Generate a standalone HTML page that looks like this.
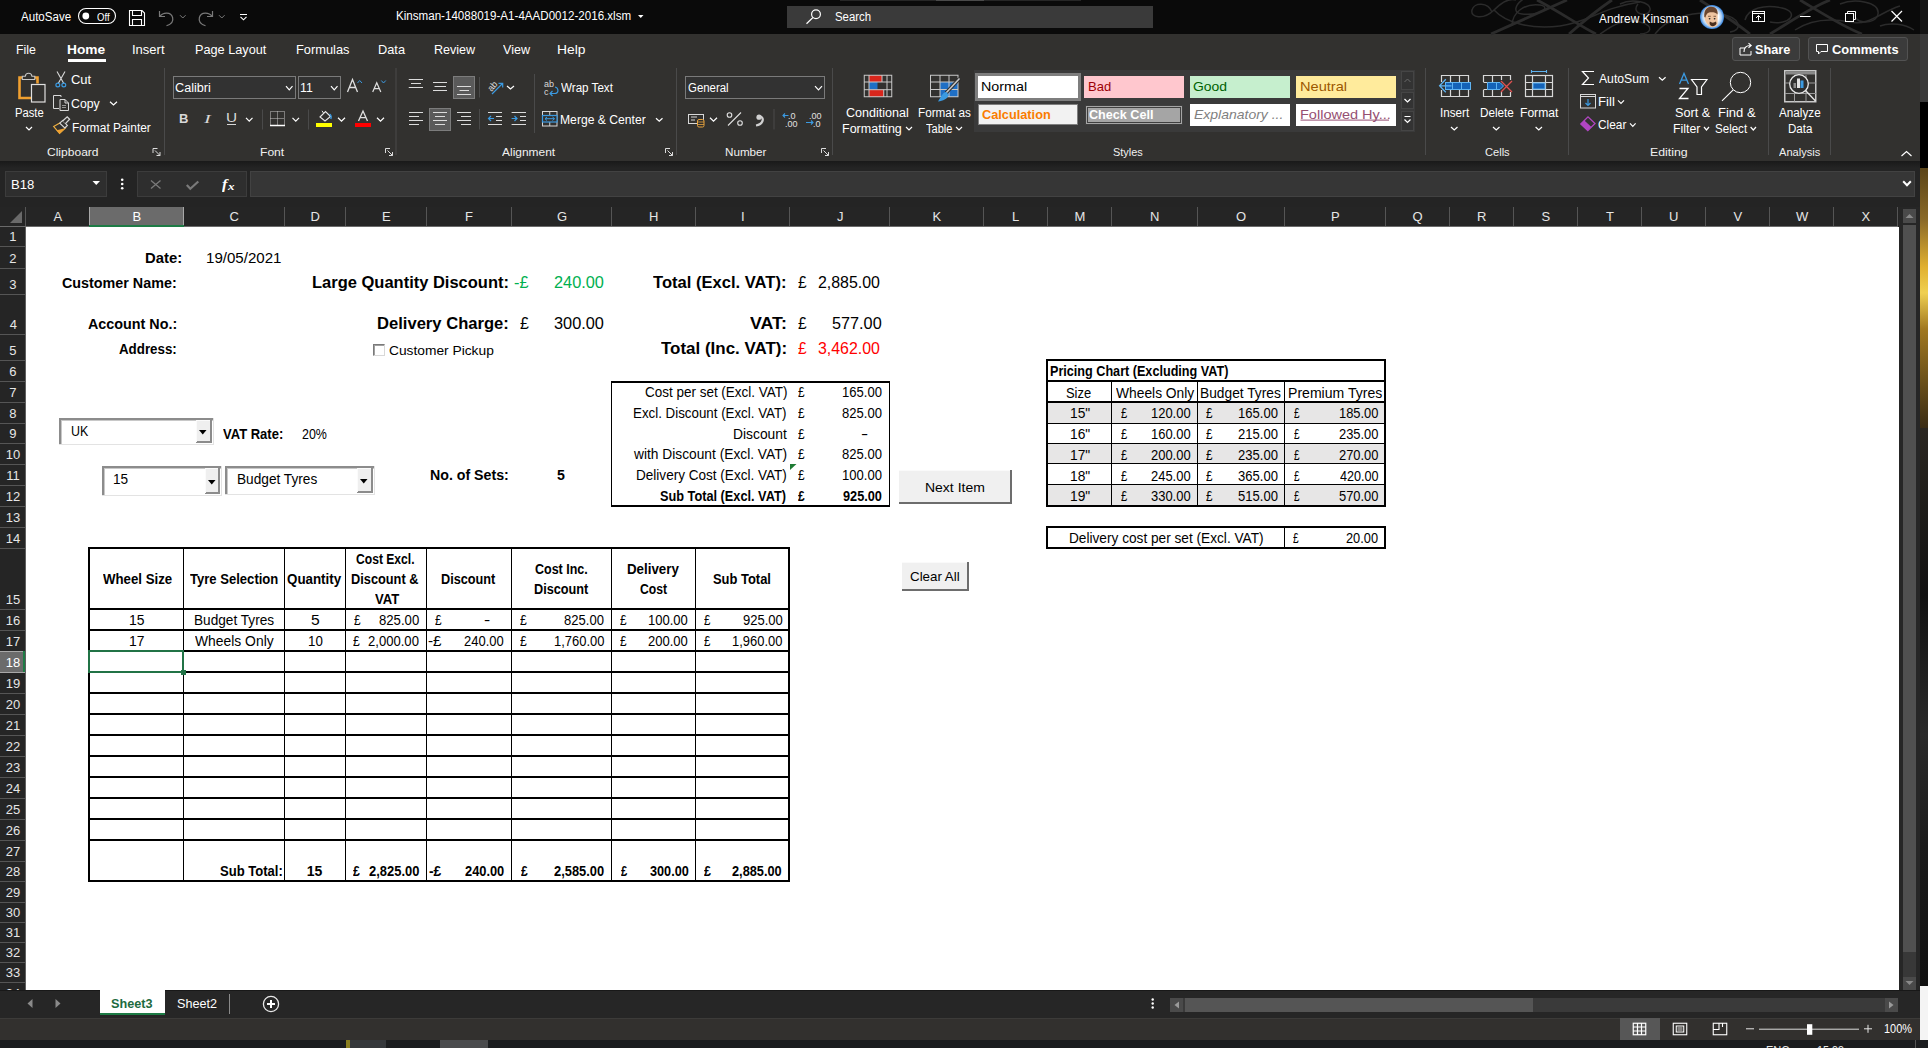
<!DOCTYPE html>
<html><head><meta charset="utf-8"><style>
html,body{margin:0;padding:0;}
body{width:1928px;height:1048px;position:relative;overflow:hidden;background:#1e1e1e;font-family:"Liberation Sans",sans-serif;}
.r{position:absolute;}
.t{position:absolute;white-space:pre;}
svg.r{overflow:visible;}
</style></head><body>
<div class="r" style="left:0px;top:0px;width:1920px;height:34px;background:#0a0a0a;"></div>
<div class="r" style="left:0px;top:34px;width:1920px;height:127px;background:#32312f;"></div>
<div class="r" style="left:0px;top:161px;width:1920px;height:829px;background:#242424;"></div>
<div class="r" style="left:0px;top:161px;width:1920px;height:7px;background:linear-gradient(#191919,#242424);"></div>
<div class="r" style="left:1920px;top:0px;width:8px;height:34px;background:#151515;"></div>
<div class="r" style="left:1920px;top:34px;width:8px;height:68px;background:#3a3a3a;"></div>
<div class="r" style="left:1920px;top:102px;width:8px;height:66px;background:#000;"></div>
<div class="r" style="left:1920px;top:168px;width:8px;height:260px;background:linear-gradient(180deg,#5a4418 0%,#8a6a28 20%,#e0b030 38%,#f0d050 48%,#a07820 62%,#3a2c14 100%);"></div>
<div class="r" style="left:1920px;top:428px;width:8px;height:558px;background:linear-gradient(180deg,#2a2620 0%,#111 30%,#2a2a2a 55%,#1a1a1a 75%,#101010 100%);"></div>
<div class="r" style="left:1920px;top:986px;width:8px;height:54px;background:#f4f4f4;"></div>
<div class="r" style="left:0px;top:1040px;width:1928px;height:8px;background:#1b1d1f;"></div>
<div class="r" style="left:5px;top:171px;width:102px;height:26px;background:#2e2e2e;border:1px solid #3c3c3c;box-sizing:border-box;"></div>
<div class="r" style="left:137px;top:171px;width:110px;height:26px;background:#2e2e2e;border:1px solid #3c3c3c;box-sizing:border-box;"></div>
<div class="r" style="left:250px;top:171px;width:1665px;height:26px;background:#363636;border:1px solid #424242;box-sizing:border-box;"></div>
<div class="r" style="left:0px;top:207px;width:1898px;height:20px;background:#252525;"></div>
<div class="r" style="left:25px;top:207px;width:1px;height:19px;background:#555555;"></div>
<div class="r" style="left:89px;top:207px;width:1px;height:19px;background:#555555;"></div>
<div class="r" style="left:183px;top:207px;width:1px;height:19px;background:#555555;"></div>
<div class="r" style="left:284px;top:207px;width:1px;height:19px;background:#555555;"></div>
<div class="r" style="left:345px;top:207px;width:1px;height:19px;background:#555555;"></div>
<div class="r" style="left:426px;top:207px;width:1px;height:19px;background:#555555;"></div>
<div class="r" style="left:511px;top:207px;width:1px;height:19px;background:#555555;"></div>
<div class="r" style="left:611px;top:207px;width:1px;height:19px;background:#555555;"></div>
<div class="r" style="left:695px;top:207px;width:1px;height:19px;background:#555555;"></div>
<div class="r" style="left:789px;top:207px;width:1px;height:19px;background:#555555;"></div>
<div class="r" style="left:889px;top:207px;width:1px;height:19px;background:#555555;"></div>
<div class="r" style="left:983px;top:207px;width:1px;height:19px;background:#555555;"></div>
<div class="r" style="left:1047px;top:207px;width:1px;height:19px;background:#555555;"></div>
<div class="r" style="left:1111px;top:207px;width:1px;height:19px;background:#555555;"></div>
<div class="r" style="left:1197px;top:207px;width:1px;height:19px;background:#555555;"></div>
<div class="r" style="left:1284px;top:207px;width:1px;height:19px;background:#555555;"></div>
<div class="r" style="left:1385px;top:207px;width:1px;height:19px;background:#555555;"></div>
<div class="r" style="left:1449px;top:207px;width:1px;height:19px;background:#555555;"></div>
<div class="r" style="left:1513px;top:207px;width:1px;height:19px;background:#555555;"></div>
<div class="r" style="left:1577px;top:207px;width:1px;height:19px;background:#555555;"></div>
<div class="r" style="left:1641px;top:207px;width:1px;height:19px;background:#555555;"></div>
<div class="r" style="left:1705px;top:207px;width:1px;height:19px;background:#555555;"></div>
<div class="r" style="left:1769px;top:207px;width:1px;height:19px;background:#555555;"></div>
<div class="r" style="left:1833px;top:207px;width:1px;height:19px;background:#555555;"></div>
<div class="r" style="left:1897px;top:207px;width:1px;height:19px;background:#555555;"></div>
<div class="r" style="left:0px;top:226px;width:1898px;height:1px;background:#6a6a6a;"></div>
<div class="r" style="left:89px;top:207px;width:95px;height:19px;background:#6b6b6b;"></div>
<div class="r" style="left:89px;top:207px;width:1px;height:19px;background:#a8a8a8;"></div>
<div class="r" style="left:183px;top:207px;width:1px;height:19px;background:#a8a8a8;"></div>
<div class="r" style="left:89px;top:225px;width:95px;height:2px;background:#1d7b45;"></div>
<svg class="r" style="left:10px;top:211px;" width="13" height="13" viewBox="0 0 13 13"><path d="M12 0 L12 12 L0 12 Z" fill="#6a6a6a"/></svg>
<div class="r" style="left:0px;top:227px;width:25px;height:763px;background:#252525;"></div>
<div class="r" style="left:0px;top:246px;width:25px;height:1px;background:#555555;"></div>
<div class="r" style="left:0px;top:268px;width:25px;height:1px;background:#555555;"></div>
<div class="r" style="left:0px;top:294px;width:25px;height:1px;background:#555555;"></div>
<div class="r" style="left:0px;top:334px;width:25px;height:1px;background:#555555;"></div>
<div class="r" style="left:0px;top:360px;width:25px;height:1px;background:#555555;"></div>
<div class="r" style="left:0px;top:381px;width:25px;height:1px;background:#555555;"></div>
<div class="r" style="left:0px;top:402px;width:25px;height:1px;background:#555555;"></div>
<div class="r" style="left:0px;top:423px;width:25px;height:1px;background:#555555;"></div>
<div class="r" style="left:0px;top:443px;width:25px;height:1px;background:#555555;"></div>
<div class="r" style="left:0px;top:464px;width:25px;height:1px;background:#555555;"></div>
<div class="r" style="left:0px;top:485px;width:25px;height:1px;background:#555555;"></div>
<div class="r" style="left:0px;top:506px;width:25px;height:1px;background:#555555;"></div>
<div class="r" style="left:0px;top:527px;width:25px;height:1px;background:#555555;"></div>
<div class="r" style="left:0px;top:548px;width:25px;height:1px;background:#555555;"></div>
<div class="r" style="left:0px;top:609px;width:25px;height:1px;background:#555555;"></div>
<div class="r" style="left:0px;top:630px;width:25px;height:1px;background:#555555;"></div>
<div class="r" style="left:0px;top:651px;width:25px;height:1px;background:#555555;"></div>
<div class="r" style="left:0px;top:672px;width:25px;height:1px;background:#555555;"></div>
<div class="r" style="left:0px;top:693px;width:25px;height:1px;background:#555555;"></div>
<div class="r" style="left:0px;top:714px;width:25px;height:1px;background:#555555;"></div>
<div class="r" style="left:0px;top:735px;width:25px;height:1px;background:#555555;"></div>
<div class="r" style="left:0px;top:756px;width:25px;height:1px;background:#555555;"></div>
<div class="r" style="left:0px;top:777px;width:25px;height:1px;background:#555555;"></div>
<div class="r" style="left:0px;top:798px;width:25px;height:1px;background:#555555;"></div>
<div class="r" style="left:0px;top:819px;width:25px;height:1px;background:#555555;"></div>
<div class="r" style="left:0px;top:840px;width:25px;height:1px;background:#555555;"></div>
<div class="r" style="left:0px;top:861px;width:25px;height:1px;background:#555555;"></div>
<div class="r" style="left:0px;top:881px;width:25px;height:1px;background:#555555;"></div>
<div class="r" style="left:0px;top:902px;width:25px;height:1px;background:#555555;"></div>
<div class="r" style="left:0px;top:922px;width:25px;height:1px;background:#555555;"></div>
<div class="r" style="left:0px;top:942px;width:25px;height:1px;background:#555555;"></div>
<div class="r" style="left:0px;top:962px;width:25px;height:1px;background:#555555;"></div>
<div class="r" style="left:0px;top:982px;width:25px;height:1px;background:#555555;"></div>
<div class="r" style="left:0px;top:1003px;width:25px;height:1px;background:#555555;"></div>
<div class="r" style="left:25px;top:227px;width:1px;height:763px;background:#5f5f5f;"></div>
<div class="r" style="left:0px;top:651px;width:25px;height:21px;background:#6b6b6b;"></div>
<div class="r" style="left:0px;top:651px;width:25px;height:1px;background:#a8a8a8;"></div>
<div class="r" style="left:0px;top:672px;width:25px;height:1px;background:#a8a8a8;"></div>
<div class="r" style="left:23px;top:651px;width:2px;height:21px;background:#1d7b45;"></div>
<div class="r" style="left:26px;top:227px;width:1873px;height:763px;background:#ffffff;"></div>
<div class="r" style="left:1899px;top:207px;width:21px;height:783px;background:#262626;"></div>
<div class="r" style="left:1903px;top:209px;width:13px;height:14px;background:#4a4a4a;"></div>
<svg class="r" style="left:1903px;top:209px;" width="13" height="14" viewBox="0 0 13 14"><path d="M2.5 9 L6.5 5 L10.5 9 Z" fill="#8a8a8a"/></svg>
<div class="r" style="left:1903px;top:225px;width:13px;height:727px;background:#505050;"></div>
<div class="r" style="left:1903px;top:952px;width:13px;height:25px;background:#383838;"></div>
<div class="r" style="left:1903px;top:977px;width:13px;height:13px;background:#4a4a4a;"></div>
<svg class="r" style="left:1903px;top:977px;" width="13" height="13" viewBox="0 0 13 13"><path d="M2.5 4 L6.5 8 L10.5 4 Z" fill="#8a8a8a"/></svg>
<div class="r" style="left:0px;top:990px;width:1920px;height:28px;background:#262626;"></div>
<div class="r" style="left:0px;top:990px;width:1920px;height:1px;background:#181818;"></div>
<div class="r" style="left:100px;top:990px;width:65px;height:25px;background:#ffffff;"></div>
<div class="r" style="left:100px;top:1013px;width:65px;height:2px;background:#1d7b45;"></div>
<div class="r" style="left:229px;top:994px;width:1px;height:20px;background:#8a8a8a;"></div>
<svg class="r" style="left:27px;top:999px;" width="6" height="9" viewBox="0 0 6 9"><path d="M5.5 0 L0.5 4.5 L5.5 9 Z" fill="#8a8a8a"/></svg>
<svg class="r" style="left:55px;top:999px;" width="6" height="9" viewBox="0 0 6 9"><path d="M0.5 0 L5.5 4.5 L0.5 9 Z" fill="#8a8a8a"/></svg>
<svg class="r" style="left:262px;top:995px;" width="18" height="18" viewBox="0 0 18 18"><circle cx="9" cy="9" r="7.6" fill="none" stroke="#e8e8e8" stroke-width="1.3"/><path d="M9 5 V13 M5 9 H13" stroke="#fff" stroke-width="2"/></svg>
<div class="r" style="left:1170px;top:998px;width:728px;height:14px;background:#3a3a3a;"></div>
<div class="r" style="left:1170px;top:998px;width:13px;height:14px;background:#4a4a4a;"></div>
<svg class="r" style="left:1170px;top:998px;" width="13" height="14" viewBox="0 0 13 14"><path d="M9 3.5 L4.5 7 L9 10.5 Z" fill="#9a9a9a"/></svg>
<div class="r" style="left:1185px;top:998px;width:348px;height:14px;background:#555555;"></div>
<div class="r" style="left:1885px;top:998px;width:13px;height:14px;background:#4a4a4a;"></div>
<svg class="r" style="left:1885px;top:998px;" width="13" height="14" viewBox="0 0 13 14"><path d="M4 3.5 L8.5 7 L4 10.5 Z" fill="#9a9a9a"/></svg>
<svg class="r" style="left:1150px;top:998px;" width="6" height="12" viewBox="0 0 6 12"><circle cx="2.7" cy="1.5" r="1.2" fill="#fff"/><circle cx="2.7" cy="5.5" r="1.2" fill="#fff"/><circle cx="2.7" cy="9.5" r="1.2" fill="#fff"/></svg>
<div class="r" style="left:0px;top:1018px;width:1920px;height:22px;background:#32302e;"></div>
<div class="r" style="left:0px;top:1018px;width:1920px;height:1px;background:#3c3b39;"></div>
<div class="r" style="left:1620px;top:1018px;width:40px;height:22px;background:#575757;"></div>
<div class="r" style="left:373px;top:344px;width:12px;height:12px;background:#ffffff;border-top:1px solid #7a7a7a;border-left:1px solid #7a7a7a;border-right:1px solid #d8d8d8;border-bottom:1px solid #d8d8d8;box-sizing:border-box;"></div>
<div class="r" style="left:374px;top:345px;width:10px;height:10px;border-top:1px solid #a0a0a0;border-left:1px solid #a0a0a0;box-sizing:border-box;"></div>
<div class="r" style="left:611px;top:381px;width:279px;height:2px;background:#000;"></div>
<div class="r" style="left:611px;top:505px;width:279px;height:2px;background:#000;"></div>
<div class="r" style="left:611px;top:381px;width:1px;height:126px;background:#000;"></div>
<div class="r" style="left:889px;top:381px;width:1px;height:126px;background:#000;"></div>
<svg class="r" style="left:790px;top:464px;" width="7" height="6" viewBox="0 0 7 6"><path d="M0 0 H6.5 L0 6 Z" fill="#1e7b33"/></svg>
<div class="r" style="left:899px;top:470px;width:113px;height:34px;background:#f0f0f0;"></div>
<div class="r" style="left:899px;top:502px;width:113px;height:2px;background:#6d6d6d;"></div>
<div class="r" style="left:1010px;top:470px;width:2px;height:34px;background:#6d6d6d;"></div>
<div class="r" style="left:899px;top:470px;width:111px;height:1px;background:#fafafa;"></div>
<div class="r" style="left:902px;top:562px;width:67px;height:29px;background:#f0f0f0;"></div>
<div class="r" style="left:902px;top:589px;width:67px;height:2px;background:#6d6d6d;"></div>
<div class="r" style="left:967px;top:562px;width:2px;height:29px;background:#6d6d6d;"></div>
<div class="r" style="left:902px;top:562px;width:65px;height:1px;background:#fafafa;"></div>
<div class="r" style="left:59px;top:418px;width:155px;height:27px;background:#ffffff;"></div>
<div class="r" style="left:59px;top:418px;width:155px;height:2px;background:#8c8c8c;"></div>
<div class="r" style="left:59px;top:418px;width:2px;height:27px;background:#8c8c8c;"></div>
<div class="r" style="left:59px;top:444px;width:155px;height:1px;background:#e3e3e3;"></div>
<div class="r" style="left:213px;top:418px;width:1px;height:27px;background:#e3e3e3;"></div>
<div class="r" style="left:61px;top:420px;width:152px;height:1px;background:#c8c8c8;"></div>
<div class="r" style="left:61px;top:420px;width:1px;height:24px;background:#c8c8c8;"></div>
<div class="r" style="left:196px;top:420px;width:16px;height:23px;background:#efefef;"></div>
<div class="r" style="left:196px;top:441px;width:16px;height:2px;background:#8c8c8c;"></div>
<div class="r" style="left:210px;top:420px;width:2px;height:23px;background:#8c8c8c;"></div>
<div class="r" style="left:196px;top:420px;width:14px;height:1px;background:#fbfbfb;"></div>
<div class="r" style="left:196px;top:420px;width:1px;height:22px;background:#fbfbfb;"></div>
<svg class="r" style="left:199.0px;top:430px;" width="8" height="5" viewBox="0 0 8 5"><path d="M0 0 H7.5 L3.75 4.5 Z" fill="#000"/></svg>
<div class="r" style="left:102px;top:466px;width:120px;height:30px;background:#ffffff;"></div>
<div class="r" style="left:102px;top:466px;width:120px;height:2px;background:#8c8c8c;"></div>
<div class="r" style="left:102px;top:466px;width:2px;height:30px;background:#8c8c8c;"></div>
<div class="r" style="left:102px;top:495px;width:120px;height:1px;background:#e3e3e3;"></div>
<div class="r" style="left:221px;top:466px;width:1px;height:30px;background:#e3e3e3;"></div>
<div class="r" style="left:104px;top:468px;width:117px;height:1px;background:#c8c8c8;"></div>
<div class="r" style="left:104px;top:468px;width:1px;height:27px;background:#c8c8c8;"></div>
<div class="r" style="left:205px;top:468px;width:15px;height:26px;background:#efefef;"></div>
<div class="r" style="left:205px;top:492px;width:15px;height:2px;background:#8c8c8c;"></div>
<div class="r" style="left:218px;top:468px;width:2px;height:26px;background:#8c8c8c;"></div>
<div class="r" style="left:205px;top:468px;width:13px;height:1px;background:#fbfbfb;"></div>
<div class="r" style="left:205px;top:468px;width:1px;height:25px;background:#fbfbfb;"></div>
<svg class="r" style="left:207.5px;top:480px;" width="8" height="5" viewBox="0 0 8 5"><path d="M0 0 H7.5 L3.75 4.5 Z" fill="#000"/></svg>
<div class="r" style="left:225px;top:466px;width:150px;height:29px;background:#ffffff;"></div>
<div class="r" style="left:225px;top:466px;width:150px;height:2px;background:#8c8c8c;"></div>
<div class="r" style="left:225px;top:466px;width:2px;height:29px;background:#8c8c8c;"></div>
<div class="r" style="left:225px;top:494px;width:150px;height:1px;background:#e3e3e3;"></div>
<div class="r" style="left:374px;top:466px;width:1px;height:29px;background:#e3e3e3;"></div>
<div class="r" style="left:227px;top:468px;width:147px;height:1px;background:#c8c8c8;"></div>
<div class="r" style="left:227px;top:468px;width:1px;height:26px;background:#c8c8c8;"></div>
<div class="r" style="left:357px;top:468px;width:16px;height:25px;background:#efefef;"></div>
<div class="r" style="left:357px;top:491px;width:16px;height:2px;background:#8c8c8c;"></div>
<div class="r" style="left:371px;top:468px;width:2px;height:25px;background:#8c8c8c;"></div>
<div class="r" style="left:357px;top:468px;width:14px;height:1px;background:#fbfbfb;"></div>
<div class="r" style="left:357px;top:468px;width:1px;height:24px;background:#fbfbfb;"></div>
<svg class="r" style="left:360.0px;top:479px;" width="8" height="5" viewBox="0 0 8 5"><path d="M0 0 H7.5 L3.75 4.5 Z" fill="#000"/></svg>
<div class="r" style="left:1048px;top:403px;width:336px;height:20px;background:#e7e6e6;"></div>
<div class="r" style="left:1048px;top:444px;width:336px;height:19px;background:#e7e6e6;"></div>
<div class="r" style="left:1048px;top:485px;width:336px;height:20px;background:#e7e6e6;"></div>
<div class="r" style="left:1046px;top:359px;width:340px;height:2px;background:#000;"></div>
<div class="r" style="left:1046px;top:505px;width:340px;height:2px;background:#000;"></div>
<div class="r" style="left:1046px;top:359px;width:2px;height:148px;background:#000;"></div>
<div class="r" style="left:1384px;top:359px;width:2px;height:148px;background:#000;"></div>
<div class="r" style="left:1046px;top:380px;width:340px;height:2px;background:#000;"></div>
<div class="r" style="left:1046px;top:401px;width:340px;height:2px;background:#000;"></div>
<div class="r" style="left:1046px;top:423px;width:340px;height:1px;background:#000;"></div>
<div class="r" style="left:1046px;top:443px;width:340px;height:1px;background:#000;"></div>
<div class="r" style="left:1046px;top:463px;width:340px;height:1px;background:#000;"></div>
<div class="r" style="left:1046px;top:484px;width:340px;height:1px;background:#000;"></div>
<div class="r" style="left:1111px;top:381px;width:1px;height:125px;background:#000;"></div>
<div class="r" style="left:1197px;top:381px;width:1px;height:125px;background:#000;"></div>
<div class="r" style="left:1284px;top:381px;width:1px;height:125px;background:#000;"></div>
<div class="r" style="left:1046px;top:526px;width:340px;height:2px;background:#000;"></div>
<div class="r" style="left:1046px;top:547px;width:340px;height:2px;background:#000;"></div>
<div class="r" style="left:1046px;top:526px;width:2px;height:23px;background:#000;"></div>
<div class="r" style="left:1384px;top:526px;width:2px;height:23px;background:#000;"></div>
<div class="r" style="left:1284px;top:527px;width:1px;height:21px;background:#000;"></div>
<div class="r" style="left:88px;top:547px;width:702px;height:2px;background:#000;"></div>
<div class="r" style="left:88px;top:880px;width:702px;height:2px;background:#000;"></div>
<div class="r" style="left:88px;top:547px;width:2px;height:335px;background:#000;"></div>
<div class="r" style="left:788px;top:547px;width:2px;height:335px;background:#000;"></div>
<div class="r" style="left:183px;top:548px;width:1px;height:333px;background:#000;"></div>
<div class="r" style="left:284px;top:548px;width:1px;height:333px;background:#000;"></div>
<div class="r" style="left:345px;top:548px;width:1px;height:333px;background:#000;"></div>
<div class="r" style="left:426px;top:548px;width:1px;height:333px;background:#000;"></div>
<div class="r" style="left:511px;top:548px;width:1px;height:333px;background:#000;"></div>
<div class="r" style="left:611px;top:548px;width:1px;height:333px;background:#000;"></div>
<div class="r" style="left:695px;top:548px;width:1px;height:333px;background:#000;"></div>
<div class="r" style="left:88px;top:608px;width:702px;height:2px;background:#000;"></div>
<div class="r" style="left:88px;top:629px;width:702px;height:2px;background:#000;"></div>
<div class="r" style="left:88px;top:650px;width:702px;height:2px;background:#000;"></div>
<div class="r" style="left:88px;top:671px;width:702px;height:2px;background:#000;"></div>
<div class="r" style="left:88px;top:692px;width:702px;height:2px;background:#000;"></div>
<div class="r" style="left:88px;top:713px;width:702px;height:2px;background:#000;"></div>
<div class="r" style="left:88px;top:734px;width:702px;height:2px;background:#000;"></div>
<div class="r" style="left:88px;top:755px;width:702px;height:2px;background:#000;"></div>
<div class="r" style="left:88px;top:776px;width:702px;height:2px;background:#000;"></div>
<div class="r" style="left:88px;top:797px;width:702px;height:2px;background:#000;"></div>
<div class="r" style="left:88px;top:818px;width:702px;height:2px;background:#000;"></div>
<div class="r" style="left:88px;top:839px;width:702px;height:2px;background:#000;"></div>
<div class="r" style="left:68px;top:59px;width:38px;height:3px;background:#ffffff;"></div>
<svg class="r" style="left:0;top:0" width="1920" height="34" viewBox="0 0 1920 34"><g stroke="#2b2b2b" fill="none" stroke-width="1.5"><path d="M1492 12 C1488 2,1474 2,1472 10 C1470 18,1484 20,1494 10 C1502 2,1510 -2,1516 0"/><path d="M1494 10 C1505 22,1530 30,1560 26 C1590 22,1600 8,1640 2"/><path d="M1512 26 C1512 12,1525 3,1540 5 C1552 7,1540 16,1522 14 C1512 13,1515 4,1525 -2"/><path d="M1600 34 C1612 26,1622 18,1640 22 C1656 26,1650 34,1640 34"/><path d="M1620 4 C1632 -2,1652 2,1650 10 C1648 18,1630 14,1638 4"/><path d="M1655 34 C1665 20,1690 10,1720 14 C1740 17,1744 30,1730 32"/><path d="M1745 20 C1748 8,1765 4,1782 8 C1800 12,1790 26,1770 22"/><path d="M1795 30 C1810 20,1830 18,1850 22 C1870 26,1880 12,1900 6"/><path d="M1840 4 C1855 -2,1880 2,1878 14 C1876 26,1850 24,1856 12"/><path d="M1880 26 C1890 22,1905 24,1914 30"/></g><g stroke="#2b2b2b" fill="none" stroke-width="2.8"><path d="M1491 34 L1567 0"/><path d="M1569 34 C1585 20,1600 8,1612 0"/><path d="M1537 0 C1560 12,1580 26,1596 34"/><path d="M1770 34 C1790 22,1810 8,1830 0"/><path d="M1800 0 C1820 12,1845 28,1862 34"/><path d="M1700 0 C1715 10,1730 18,1750 34"/></g></svg>
<div class="r" style="left:787px;top:6px;width:366px;height:22px;background:#3a3a3a;"></div>
<div class="r" style="left:840px;top:0px;width:241px;height:1px;background:#262626;"></div>
<div class="r" style="left:936px;top:0px;width:48px;height:1px;background:#4a4a4a;"></div>
<div class="r" style="left:1732px;top:37px;width:68px;height:24px;background:#3b3b3b;border:1px solid #525252;border-radius:3px;box-sizing:border-box"></div>
<div class="r" style="left:1808px;top:37px;width:100px;height:24px;background:#3b3b3b;border:1px solid #525252;border-radius:3px;box-sizing:border-box"></div>
<div class="r" style="left:173px;top:76px;width:123px;height:23px;background:#323232;border:1px solid #7a7a7a;box-sizing:border-box"></div>
<div class="r" style="left:298px;top:76px;width:43px;height:23px;background:#323232;border:1px solid #7a7a7a;box-sizing:border-box"></div>
<div class="r" style="left:227px;top:124px;width:9px;height:1px;background:#d8d8d8;"></div>
<div class="r" style="left:685px;top:76px;width:140px;height:23px;background:#323232;border:1px solid #7a7a7a;box-sizing:border-box"></div>
<div class="r" style="left:974px;top:70px;width:441px;height:62px;background:#3a3a3a;"></div>
<div class="r" style="left:975px;top:73px;width:106px;height:28px;background:#7e7e7e;"></div>
<div class="r" style="left:978px;top:76px;width:100px;height:22px;background:#ffffff;"></div>
<div class="r" style="left:1084px;top:76px;width:100px;height:22px;background:#ffc7ce;"></div>
<div class="r" style="left:1190px;top:76px;width:100px;height:22px;background:#c6efce;"></div>
<div class="r" style="left:1296px;top:76px;width:100px;height:22px;background:#ffeb9c;"></div>
<div class="r" style="left:978px;top:104px;width:100px;height:21px;background:#f2f2f2;border:1px solid #7f7f7f;box-sizing:border-box;"></div>
<div class="r" style="left:1085px;top:105px;width:98px;height:20px;background:#a5a5a5;border:1px solid #3f3f3f;box-sizing:border-box;box-shadow: inset 0 0 0 1px #a5a5a5, inset 0 0 0 2px #3f3f3f;"></div>
<div class="r" style="left:1190px;top:104px;width:100px;height:22px;background:#ffffff;"></div>
<div class="r" style="left:1296px;top:104px;width:100px;height:22px;background:#ffffff;"></div>
<div class="r" style="left:1401px;top:71px;width:13px;height:19px;background:#333333;border:1px solid #454545;box-sizing:border-box;"></div>
<div class="r" style="left:1401px;top:92px;width:13px;height:17px;background:#333333;border:1px solid #454545;box-sizing:border-box;"></div>
<div class="r" style="left:1401px;top:111px;width:13px;height:20px;background:#333333;border:1px solid #454545;box-sizing:border-box;"></div>
<div class="r" style="left:346px;top:1040px;width:4px;height:8px;background:#8a7f20;"></div>
<div class="r" style="left:350px;top:1040px;width:36px;height:8px;background:#35383b;"></div>
<div class="r" style="left:440px;top:1040px;width:48px;height:8px;background:#4a4b4d;"></div>
<div class="t" style="left:144.54px;top:249.00px;font-family:'Liberation Sans';font-size:14px;font-weight:700;line-height:18px;height:18px;white-space:pre;color:#000;transform:scaleX(1.0606);transform-origin:0 0;">Date:</div>
<div class="t" style="left:205.82px;top:249.00px;font-family:'Liberation Sans';font-size:14px;font-weight:400;line-height:18px;height:18px;white-space:pre;color:#000;transform:scaleX(1.0775);transform-origin:0 0;">19/05/2021</div>
<div class="t" style="left:61.98px;top:274.00px;font-family:'Liberation Sans';font-size:14px;font-weight:700;line-height:18px;height:18px;white-space:pre;color:#000;transform:scaleX(1.0236);transform-origin:0 0;">Customer Name:</div>
<div class="t" style="left:311.53px;top:272.00px;font-family:'Liberation Sans';font-size:17px;font-weight:700;line-height:22px;height:22px;white-space:pre;color:#000;transform:scaleX(0.9701);transform-origin:0 0;">Large Quantity Discount:</div>
<div class="t" style="left:514.04px;top:272.00px;font-family:'Liberation Sans';font-size:17px;font-weight:400;line-height:22px;height:22px;white-space:pre;color:#00b050;transform:scaleX(0.9643);transform-origin:0 0;">-£</div>
<div class="t" style="left:553.79px;top:272.00px;font-family:'Liberation Sans';font-size:17px;font-weight:400;line-height:22px;height:22px;white-space:pre;color:#00b050;transform:scaleX(0.9600);transform-origin:0 0;">240.00</div>
<div class="t" style="left:653.00px;top:272.00px;font-family:'Liberation Sans';font-size:17px;font-weight:700;line-height:22px;height:22px;white-space:pre;color:#000;transform:scaleX(0.9750);transform-origin:0 0;">Total (Excl. VAT):</div>
<div class="t" style="left:798.00px;top:272.00px;font-family:'Liberation Sans';font-size:17px;font-weight:400;line-height:22px;height:22px;white-space:pre;color:#000;transform:scaleX(0.9167);transform-origin:0 0;">£</div>
<div class="t" style="left:818.46px;top:272.00px;font-family:'Liberation Sans';font-size:17px;font-weight:400;line-height:22px;height:22px;white-space:pre;color:#000;transform:scaleX(0.9362);transform-origin:0 0;">2,885.00</div>
<div class="t" style="left:87.50px;top:315.00px;font-family:'Liberation Sans';font-size:14px;font-weight:700;line-height:18px;height:18px;white-space:pre;color:#000;transform:scaleX(1.0244);transform-origin:0 0;">Account No.:</div>
<div class="t" style="left:376.77px;top:313.00px;font-family:'Liberation Sans';font-size:17px;font-weight:700;line-height:22px;height:22px;white-space:pre;color:#000;transform:scaleX(0.9756);transform-origin:0 0;">Delivery Charge:</div>
<div class="t" style="left:520.00px;top:313.00px;font-family:'Liberation Sans';font-size:17px;font-weight:400;line-height:22px;height:22px;white-space:pre;color:#000;transform:scaleX(0.9444);transform-origin:0 0;">£</div>
<div class="t" style="left:553.79px;top:313.00px;font-family:'Liberation Sans';font-size:17px;font-weight:400;line-height:22px;height:22px;white-space:pre;color:#000;transform:scaleX(0.9600);transform-origin:0 0;">300.00</div>
<div class="t" style="left:750.00px;top:313.00px;font-family:'Liberation Sans';font-size:17px;font-weight:700;line-height:22px;height:22px;white-space:pre;color:#000;transform:scaleX(1.0471);transform-origin:0 0;">VAT:</div>
<div class="t" style="left:798.00px;top:313.00px;font-family:'Liberation Sans';font-size:17px;font-weight:400;line-height:22px;height:22px;white-space:pre;color:#000;transform:scaleX(0.9167);transform-origin:0 0;">£</div>
<div class="t" style="left:831.54px;top:313.00px;font-family:'Liberation Sans';font-size:17px;font-weight:400;line-height:22px;height:22px;white-space:pre;color:#000;transform:scaleX(0.9550);transform-origin:0 0;">577.00</div>
<div class="t" style="left:118.50px;top:340.00px;font-family:'Liberation Sans';font-size:14px;font-weight:700;line-height:18px;height:18px;white-space:pre;color:#000;transform:scaleX(0.9517);transform-origin:0 0;">Address:</div>
<div class="t" style="left:388.98px;top:341.50px;font-family:'Liberation Sans';font-size:13.5px;font-weight:400;line-height:18px;height:18px;white-space:pre;color:#000;transform:scaleX(1.0198);transform-origin:0 0;">Customer Pickup</div>
<div class="t" style="left:661.00px;top:338.00px;font-family:'Liberation Sans';font-size:17px;font-weight:700;line-height:22px;height:22px;white-space:pre;color:#000;transform:scaleX(0.9968);transform-origin:0 0;">Total (Inc. VAT):</div>
<div class="t" style="left:798.00px;top:338.00px;font-family:'Liberation Sans';font-size:17px;font-weight:400;line-height:22px;height:22px;white-space:pre;color:#ff0000;transform:scaleX(0.9167);transform-origin:0 0;">£</div>
<div class="t" style="left:818.46px;top:338.00px;font-family:'Liberation Sans';font-size:17px;font-weight:400;line-height:22px;height:22px;white-space:pre;color:#ff0000;transform:scaleX(0.9362);transform-origin:0 0;">3,462.00</div>
<div class="t" style="left:644.54px;top:383.00px;font-family:'Liberation Sans';font-size:14px;font-weight:400;line-height:18px;height:18px;white-space:pre;color:#000;transform:scaleX(0.9623);transform-origin:0 0;">Cost per set (Excl. VAT)</div>
<div class="t" style="left:797.50px;top:383.00px;font-family:'Liberation Sans';font-size:14px;font-weight:400;line-height:18px;height:18px;white-space:pre;color:#000;transform:scaleX(0.8500);transform-origin:0 0;">£</div>
<div class="t" style="left:842.27px;top:383.00px;font-family:'Liberation Sans';font-size:14px;font-weight:400;line-height:18px;height:18px;white-space:pre;color:#000;transform:scaleX(0.9317);transform-origin:0 0;">165.00</div>
<div class="t" style="left:632.75px;top:404.00px;font-family:'Liberation Sans';font-size:14px;font-weight:400;line-height:18px;height:18px;white-space:pre;color:#000;transform:scaleX(0.9519);transform-origin:0 0;">Excl. Discount (Excl. VAT)</div>
<div class="t" style="left:797.50px;top:404.00px;font-family:'Liberation Sans';font-size:14px;font-weight:400;line-height:18px;height:18px;white-space:pre;color:#000;transform:scaleX(0.8500);transform-origin:0 0;">£</div>
<div class="t" style="left:842.27px;top:404.00px;font-family:'Liberation Sans';font-size:14px;font-weight:400;line-height:18px;height:18px;white-space:pre;color:#000;transform:scaleX(0.9317);transform-origin:0 0;">825.00</div>
<div class="t" style="left:732.61px;top:425.00px;font-family:'Liberation Sans';font-size:14px;font-weight:400;line-height:18px;height:18px;white-space:pre;color:#000;transform:scaleX(0.9887);transform-origin:0 0;">Discount</div>
<div class="t" style="left:797.50px;top:425.00px;font-family:'Liberation Sans';font-size:14px;font-weight:400;line-height:18px;height:18px;white-space:pre;color:#000;transform:scaleX(0.8500);transform-origin:0 0;">£</div>
<div class="t" style="left:861.27px;top:425.00px;font-family:'Liberation Sans';font-size:14px;font-weight:400;line-height:18px;height:18px;white-space:pre;color:#000;transform:scaleX(1.5333);transform-origin:0 0;">-</div>
<div class="t" style="left:633.70px;top:445.00px;font-family:'Liberation Sans';font-size:14px;font-weight:400;line-height:18px;height:18px;white-space:pre;color:#000;transform:scaleX(0.9826);transform-origin:0 0;">with Discount (Excl. VAT)</div>
<div class="t" style="left:797.50px;top:445.00px;font-family:'Liberation Sans';font-size:14px;font-weight:400;line-height:18px;height:18px;white-space:pre;color:#000;transform:scaleX(0.8500);transform-origin:0 0;">£</div>
<div class="t" style="left:842.27px;top:445.00px;font-family:'Liberation Sans';font-size:14px;font-weight:400;line-height:18px;height:18px;white-space:pre;color:#000;transform:scaleX(0.9317);transform-origin:0 0;">825.00</div>
<div class="t" style="left:635.93px;top:466.00px;font-family:'Liberation Sans';font-size:14px;font-weight:400;line-height:18px;height:18px;white-space:pre;color:#000;transform:scaleX(0.9682);transform-origin:0 0;">Delivery Cost (Excl. VAT)</div>
<div class="t" style="left:797.50px;top:466.00px;font-family:'Liberation Sans';font-size:14px;font-weight:400;line-height:18px;height:18px;white-space:pre;color:#000;transform:scaleX(0.8500);transform-origin:0 0;">£</div>
<div class="t" style="left:842.27px;top:466.00px;font-family:'Liberation Sans';font-size:14px;font-weight:400;line-height:18px;height:18px;white-space:pre;color:#000;transform:scaleX(0.9317);transform-origin:0 0;">100.00</div>
<div class="t" style="left:660.49px;top:487.00px;font-family:'Liberation Sans';font-size:14px;font-weight:700;line-height:18px;height:18px;white-space:pre;color:#000;transform:scaleX(0.9095);transform-origin:0 0;">Sub Total (Excl. VAT)</div>
<div class="t" style="left:797.50px;top:487.00px;font-family:'Liberation Sans';font-size:14px;font-weight:700;line-height:18px;height:18px;white-space:pre;color:#000;transform:scaleX(0.8500);transform-origin:0 0;">£</div>
<div class="t" style="left:843.20px;top:487.00px;font-family:'Liberation Sans';font-size:14px;font-weight:700;line-height:18px;height:18px;white-space:pre;color:#000;transform:scaleX(0.9095);transform-origin:0 0;">925.00</div>
<div class="t" style="left:924.96px;top:479.00px;font-family:'Liberation Sans';font-size:13.5px;font-weight:400;line-height:18px;height:18px;white-space:pre;color:#000;transform:scaleX(1.0357);transform-origin:0 0;">Next Item</div>
<div class="t" style="left:909.61px;top:568.00px;font-family:'Liberation Sans';font-size:13.5px;font-weight:400;line-height:18px;height:18px;white-space:pre;color:#000;transform:scaleX(0.9878);transform-origin:0 0;">Clear All</div>
<div class="t" style="left:70.61px;top:422.00px;font-family:'Liberation Sans';font-size:14px;font-weight:400;line-height:18px;height:18px;white-space:pre;color:#000;transform:scaleX(0.8889);transform-origin:0 0;">UK</div>
<div class="t" style="left:222.50px;top:425.00px;font-family:'Liberation Sans';font-size:14px;font-weight:700;line-height:18px;height:18px;white-space:pre;color:#000;transform:scaleX(0.9297);transform-origin:0 0;">VAT Rate:</div>
<div class="t" style="left:302.11px;top:425.00px;font-family:'Liberation Sans';font-size:14px;font-weight:400;line-height:18px;height:18px;white-space:pre;color:#000;transform:scaleX(0.8889);transform-origin:0 0;">20%</div>
<div class="t" style="left:113.43px;top:470.00px;font-family:'Liberation Sans';font-size:14px;font-weight:400;line-height:18px;height:18px;white-space:pre;color:#000;transform:scaleX(0.9714);transform-origin:0 0;">15</div>
<div class="t" style="left:236.52px;top:470.00px;font-family:'Liberation Sans';font-size:14px;font-weight:400;line-height:18px;height:18px;white-space:pre;color:#000;transform:scaleX(0.9753);transform-origin:0 0;">Budget Tyres</div>
<div class="t" style="left:430.49px;top:466.00px;font-family:'Liberation Sans';font-size:14px;font-weight:700;line-height:18px;height:18px;white-space:pre;color:#000;transform:scaleX(1.0132);transform-origin:0 0;">No. of Sets:</div>
<div class="t" style="left:557.49px;top:466.00px;font-family:'Liberation Sans';font-size:14px;font-weight:700;line-height:18px;height:18px;white-space:pre;color:#000;transform:scaleX(1.0143);transform-origin:0 0;">5</div>
<div class="t" style="left:1049.60px;top:362.20px;font-family:'Liberation Sans';font-size:14px;font-weight:700;line-height:18px;height:18px;white-space:pre;color:#000;transform:scaleX(0.9015);transform-origin:0 0;">Pricing Chart (Excluding VAT)</div>
<div class="t" style="left:1066.08px;top:383.50px;font-family:'Liberation Sans';font-size:14px;font-weight:400;line-height:18px;height:18px;white-space:pre;color:#000;transform:scaleX(0.9231);transform-origin:0 0;">Size</div>
<div class="t" style="left:1115.70px;top:383.50px;font-family:'Liberation Sans';font-size:14px;font-weight:400;line-height:18px;height:18px;white-space:pre;color:#000;transform:scaleX(0.9861);transform-origin:0 0;">Wheels Only</div>
<div class="t" style="left:1200.02px;top:383.50px;font-family:'Liberation Sans';font-size:14px;font-weight:400;line-height:18px;height:18px;white-space:pre;color:#000;transform:scaleX(0.9827);transform-origin:0 0;">Budget Tyres</div>
<div class="t" style="left:1288.00px;top:383.50px;font-family:'Liberation Sans';font-size:14px;font-weight:400;line-height:18px;height:18px;white-space:pre;color:#000;transform:scaleX(1.0043);transform-origin:0 0;">Premium Tyres</div>
<div class="t" style="left:1069.72px;top:404.30px;font-family:'Liberation Sans';font-size:14px;font-weight:400;line-height:18px;height:18px;white-space:pre;color:#000;transform:scaleX(0.9842);transform-origin:0 0;">15"</div>
<div class="t" style="left:1120.60px;top:404.30px;font-family:'Liberation Sans';font-size:14px;font-weight:400;line-height:18px;height:18px;white-space:pre;color:#000;transform:scaleX(0.8000);transform-origin:0 0;">£</div>
<div class="t" style="left:1150.68px;top:404.30px;font-family:'Liberation Sans';font-size:14px;font-weight:400;line-height:18px;height:18px;white-space:pre;color:#000;transform:scaleX(0.9244);transform-origin:0 0;">120.00</div>
<div class="t" style="left:1206.30px;top:404.30px;font-family:'Liberation Sans';font-size:14px;font-weight:400;line-height:18px;height:18px;white-space:pre;color:#000;transform:scaleX(0.8375);transform-origin:0 0;">£</div>
<div class="t" style="left:1237.67px;top:404.30px;font-family:'Liberation Sans';font-size:14px;font-weight:400;line-height:18px;height:18px;white-space:pre;color:#000;transform:scaleX(0.9317);transform-origin:0 0;">165.00</div>
<div class="t" style="left:1294.00px;top:404.30px;font-family:'Liberation Sans';font-size:14px;font-weight:400;line-height:18px;height:18px;white-space:pre;color:#000;transform:scaleX(0.7125);transform-origin:0 0;">£</div>
<div class="t" style="left:1338.88px;top:404.30px;font-family:'Liberation Sans';font-size:14px;font-weight:400;line-height:18px;height:18px;white-space:pre;color:#000;transform:scaleX(0.9220);transform-origin:0 0;">185.00</div>
<div class="t" style="left:1069.72px;top:425.20px;font-family:'Liberation Sans';font-size:14px;font-weight:400;line-height:18px;height:18px;white-space:pre;color:#000;transform:scaleX(0.9842);transform-origin:0 0;">16"</div>
<div class="t" style="left:1120.60px;top:425.20px;font-family:'Liberation Sans';font-size:14px;font-weight:400;line-height:18px;height:18px;white-space:pre;color:#000;transform:scaleX(0.8000);transform-origin:0 0;">£</div>
<div class="t" style="left:1150.68px;top:425.20px;font-family:'Liberation Sans';font-size:14px;font-weight:400;line-height:18px;height:18px;white-space:pre;color:#000;transform:scaleX(0.9244);transform-origin:0 0;">160.00</div>
<div class="t" style="left:1206.30px;top:425.20px;font-family:'Liberation Sans';font-size:14px;font-weight:400;line-height:18px;height:18px;white-space:pre;color:#000;transform:scaleX(0.8375);transform-origin:0 0;">£</div>
<div class="t" style="left:1237.67px;top:425.20px;font-family:'Liberation Sans';font-size:14px;font-weight:400;line-height:18px;height:18px;white-space:pre;color:#000;transform:scaleX(0.9317);transform-origin:0 0;">215.00</div>
<div class="t" style="left:1294.00px;top:425.20px;font-family:'Liberation Sans';font-size:14px;font-weight:400;line-height:18px;height:18px;white-space:pre;color:#000;transform:scaleX(0.7125);transform-origin:0 0;">£</div>
<div class="t" style="left:1338.88px;top:425.20px;font-family:'Liberation Sans';font-size:14px;font-weight:400;line-height:18px;height:18px;white-space:pre;color:#000;transform:scaleX(0.9220);transform-origin:0 0;">235.00</div>
<div class="t" style="left:1069.72px;top:445.50px;font-family:'Liberation Sans';font-size:14px;font-weight:400;line-height:18px;height:18px;white-space:pre;color:#000;transform:scaleX(0.9842);transform-origin:0 0;">17"</div>
<div class="t" style="left:1120.60px;top:445.50px;font-family:'Liberation Sans';font-size:14px;font-weight:400;line-height:18px;height:18px;white-space:pre;color:#000;transform:scaleX(0.8000);transform-origin:0 0;">£</div>
<div class="t" style="left:1150.68px;top:445.50px;font-family:'Liberation Sans';font-size:14px;font-weight:400;line-height:18px;height:18px;white-space:pre;color:#000;transform:scaleX(0.9244);transform-origin:0 0;">200.00</div>
<div class="t" style="left:1206.30px;top:445.50px;font-family:'Liberation Sans';font-size:14px;font-weight:400;line-height:18px;height:18px;white-space:pre;color:#000;transform:scaleX(0.8375);transform-origin:0 0;">£</div>
<div class="t" style="left:1237.67px;top:445.50px;font-family:'Liberation Sans';font-size:14px;font-weight:400;line-height:18px;height:18px;white-space:pre;color:#000;transform:scaleX(0.9317);transform-origin:0 0;">235.00</div>
<div class="t" style="left:1294.00px;top:445.50px;font-family:'Liberation Sans';font-size:14px;font-weight:400;line-height:18px;height:18px;white-space:pre;color:#000;transform:scaleX(0.7125);transform-origin:0 0;">£</div>
<div class="t" style="left:1338.88px;top:445.50px;font-family:'Liberation Sans';font-size:14px;font-weight:400;line-height:18px;height:18px;white-space:pre;color:#000;transform:scaleX(0.9220);transform-origin:0 0;">270.00</div>
<div class="t" style="left:1069.72px;top:466.50px;font-family:'Liberation Sans';font-size:14px;font-weight:400;line-height:18px;height:18px;white-space:pre;color:#000;transform:scaleX(0.9842);transform-origin:0 0;">18"</div>
<div class="t" style="left:1120.60px;top:466.50px;font-family:'Liberation Sans';font-size:14px;font-weight:400;line-height:18px;height:18px;white-space:pre;color:#000;transform:scaleX(0.8000);transform-origin:0 0;">£</div>
<div class="t" style="left:1150.68px;top:466.50px;font-family:'Liberation Sans';font-size:14px;font-weight:400;line-height:18px;height:18px;white-space:pre;color:#000;transform:scaleX(0.9244);transform-origin:0 0;">245.00</div>
<div class="t" style="left:1206.30px;top:466.50px;font-family:'Liberation Sans';font-size:14px;font-weight:400;line-height:18px;height:18px;white-space:pre;color:#000;transform:scaleX(0.8375);transform-origin:0 0;">£</div>
<div class="t" style="left:1237.67px;top:466.50px;font-family:'Liberation Sans';font-size:14px;font-weight:400;line-height:18px;height:18px;white-space:pre;color:#000;transform:scaleX(0.9317);transform-origin:0 0;">365.00</div>
<div class="t" style="left:1294.00px;top:466.50px;font-family:'Liberation Sans';font-size:14px;font-weight:400;line-height:18px;height:18px;white-space:pre;color:#000;transform:scaleX(0.7125);transform-origin:0 0;">£</div>
<div class="t" style="left:1339.80px;top:466.50px;font-family:'Liberation Sans';font-size:14px;font-weight:400;line-height:18px;height:18px;white-space:pre;color:#000;transform:scaleX(0.9000);transform-origin:0 0;">420.00</div>
<div class="t" style="left:1069.72px;top:487.40px;font-family:'Liberation Sans';font-size:14px;font-weight:400;line-height:18px;height:18px;white-space:pre;color:#000;transform:scaleX(0.9842);transform-origin:0 0;">19"</div>
<div class="t" style="left:1120.60px;top:487.40px;font-family:'Liberation Sans';font-size:14px;font-weight:400;line-height:18px;height:18px;white-space:pre;color:#000;transform:scaleX(0.8000);transform-origin:0 0;">£</div>
<div class="t" style="left:1150.68px;top:487.40px;font-family:'Liberation Sans';font-size:14px;font-weight:400;line-height:18px;height:18px;white-space:pre;color:#000;transform:scaleX(0.9244);transform-origin:0 0;">330.00</div>
<div class="t" style="left:1206.30px;top:487.40px;font-family:'Liberation Sans';font-size:14px;font-weight:400;line-height:18px;height:18px;white-space:pre;color:#000;transform:scaleX(0.8375);transform-origin:0 0;">£</div>
<div class="t" style="left:1237.67px;top:487.40px;font-family:'Liberation Sans';font-size:14px;font-weight:400;line-height:18px;height:18px;white-space:pre;color:#000;transform:scaleX(0.9317);transform-origin:0 0;">515.00</div>
<div class="t" style="left:1294.00px;top:487.40px;font-family:'Liberation Sans';font-size:14px;font-weight:400;line-height:18px;height:18px;white-space:pre;color:#000;transform:scaleX(0.7125);transform-origin:0 0;">£</div>
<div class="t" style="left:1338.88px;top:487.40px;font-family:'Liberation Sans';font-size:14px;font-weight:400;line-height:18px;height:18px;white-space:pre;color:#000;transform:scaleX(0.9220);transform-origin:0 0;">570.00</div>
<div class="t" style="left:1068.62px;top:528.60px;font-family:'Liberation Sans';font-size:14px;font-weight:400;line-height:18px;height:18px;white-space:pre;color:#000;transform:scaleX(0.9758);transform-origin:0 0;">Delivery cost per set (Excl. VAT)</div>
<div class="t" style="left:1293.00px;top:528.60px;font-family:'Liberation Sans';font-size:14px;font-weight:400;line-height:18px;height:18px;white-space:pre;color:#000;transform:scaleX(0.7250);transform-origin:0 0;">£</div>
<div class="t" style="left:1345.59px;top:528.60px;font-family:'Liberation Sans';font-size:14px;font-weight:400;line-height:18px;height:18px;white-space:pre;color:#000;transform:scaleX(0.9147);transform-origin:0 0;">20.00</div>
<div class="t" style="left:103.40px;top:570.00px;font-family:'Liberation Sans';font-size:14px;font-weight:700;line-height:18px;height:18px;white-space:pre;color:#000;transform:scaleX(0.9466);transform-origin:0 0;">Wheel Size</div>
<div class="t" style="left:189.80px;top:570.00px;font-family:'Liberation Sans';font-size:14px;font-weight:700;line-height:18px;height:18px;white-space:pre;color:#000;transform:scaleX(0.9330);transform-origin:0 0;">Tyre Selection</div>
<div class="t" style="left:287.35px;top:570.00px;font-family:'Liberation Sans';font-size:14px;font-weight:700;line-height:18px;height:18px;white-space:pre;color:#000;transform:scaleX(0.9536);transform-origin:0 0;">Quantity</div>
<div class="t" style="left:356.33px;top:550.00px;font-family:'Liberation Sans';font-size:14px;font-weight:700;line-height:18px;height:18px;white-space:pre;color:#000;transform:scaleX(0.8652);transform-origin:0 0;">Cost Excl.</div>
<div class="t" style="left:351.49px;top:570.00px;font-family:'Liberation Sans';font-size:14px;font-weight:700;line-height:18px;height:18px;white-space:pre;color:#000;transform:scaleX(0.9123);transform-origin:0 0;">Discount &amp;</div>
<div class="t" style="left:374.60px;top:590.00px;font-family:'Liberation Sans';font-size:14px;font-weight:700;line-height:18px;height:18px;white-space:pre;color:#000;transform:scaleX(0.9346);transform-origin:0 0;">VAT</div>
<div class="t" style="left:441.39px;top:570.00px;font-family:'Liberation Sans';font-size:14px;font-weight:700;line-height:18px;height:18px;white-space:pre;color:#000;transform:scaleX(0.9068);transform-origin:0 0;">Discount</div>
<div class="t" style="left:534.61px;top:560.00px;font-family:'Liberation Sans';font-size:14px;font-weight:700;line-height:18px;height:18px;white-space:pre;color:#000;transform:scaleX(0.8930);transform-origin:0 0;">Cost Inc.</div>
<div class="t" style="left:533.59px;top:580.00px;font-family:'Liberation Sans';font-size:14px;font-weight:700;line-height:18px;height:18px;white-space:pre;color:#000;transform:scaleX(0.9068);transform-origin:0 0;">Discount</div>
<div class="t" style="left:626.65px;top:560.00px;font-family:'Liberation Sans';font-size:14px;font-weight:700;line-height:18px;height:18px;white-space:pre;color:#000;transform:scaleX(0.9519);transform-origin:0 0;">Delivery</div>
<div class="t" style="left:639.93px;top:580.00px;font-family:'Liberation Sans';font-size:14px;font-weight:700;line-height:18px;height:18px;white-space:pre;color:#000;transform:scaleX(0.8667);transform-origin:0 0;">Cost</div>
<div class="t" style="left:713.48px;top:570.30px;font-family:'Liberation Sans';font-size:14px;font-weight:700;line-height:18px;height:18px;white-space:pre;color:#000;transform:scaleX(0.9230);transform-origin:0 0;">Sub Total</div>
<div class="t" style="left:129.01px;top:611.00px;font-family:'Liberation Sans';font-size:14px;font-weight:400;line-height:18px;height:18px;white-space:pre;color:#000;transform:scaleX(0.9929);transform-origin:0 0;">15</div>
<div class="t" style="left:193.63px;top:611.00px;font-family:'Liberation Sans';font-size:14px;font-weight:400;line-height:18px;height:18px;white-space:pre;color:#000;transform:scaleX(0.9741);transform-origin:0 0;">Budget Tyres</div>
<div class="t" style="left:310.88px;top:611.00px;font-family:'Liberation Sans';font-size:14px;font-weight:400;line-height:18px;height:18px;white-space:pre;color:#000;transform:scaleX(1.1167);transform-origin:0 0;">5</div>
<div class="t" style="left:354.00px;top:611.00px;font-family:'Liberation Sans';font-size:14px;font-weight:400;line-height:18px;height:18px;white-space:pre;color:#000;transform:scaleX(0.8500);transform-origin:0 0;">£</div>
<div class="t" style="left:379.26px;top:611.00px;font-family:'Liberation Sans';font-size:14px;font-weight:400;line-height:18px;height:18px;white-space:pre;color:#000;transform:scaleX(0.9390);transform-origin:0 0;">825.00</div>
<div class="t" style="left:435.20px;top:611.00px;font-family:'Liberation Sans';font-size:14px;font-weight:400;line-height:18px;height:18px;white-space:pre;color:#000;transform:scaleX(0.8500);transform-origin:0 0;">£</div>
<div class="t" style="left:483.67px;top:611.00px;font-family:'Liberation Sans';font-size:14px;font-weight:400;line-height:18px;height:18px;white-space:pre;color:#000;transform:scaleX(1.3333);transform-origin:0 0;">-</div>
<div class="t" style="left:519.50px;top:611.00px;font-family:'Liberation Sans';font-size:14px;font-weight:400;line-height:18px;height:18px;white-space:pre;color:#000;transform:scaleX(0.8750);transform-origin:0 0;">£</div>
<div class="t" style="left:564.37px;top:611.00px;font-family:'Liberation Sans';font-size:14px;font-weight:400;line-height:18px;height:18px;white-space:pre;color:#000;transform:scaleX(0.9317);transform-origin:0 0;">825.00</div>
<div class="t" style="left:619.50px;top:611.00px;font-family:'Liberation Sans';font-size:14px;font-weight:400;line-height:18px;height:18px;white-space:pre;color:#000;transform:scaleX(0.8500);transform-origin:0 0;">£</div>
<div class="t" style="left:648.47px;top:611.00px;font-family:'Liberation Sans';font-size:14px;font-weight:400;line-height:18px;height:18px;white-space:pre;color:#000;transform:scaleX(0.9293);transform-origin:0 0;">100.00</div>
<div class="t" style="left:703.80px;top:611.00px;font-family:'Liberation Sans';font-size:14px;font-weight:400;line-height:18px;height:18px;white-space:pre;color:#000;transform:scaleX(0.8250);transform-origin:0 0;">£</div>
<div class="t" style="left:742.57px;top:611.00px;font-family:'Liberation Sans';font-size:14px;font-weight:400;line-height:18px;height:18px;white-space:pre;color:#000;transform:scaleX(0.9293);transform-origin:0 0;">925.00</div>
<div class="t" style="left:129.01px;top:631.70px;font-family:'Liberation Sans';font-size:14px;font-weight:400;line-height:18px;height:18px;white-space:pre;color:#000;transform:scaleX(0.9929);transform-origin:0 0;">17</div>
<div class="t" style="left:195.20px;top:631.70px;font-family:'Liberation Sans';font-size:14px;font-weight:400;line-height:18px;height:18px;white-space:pre;color:#000;transform:scaleX(0.9911);transform-origin:0 0;">Wheels Only</div>
<div class="t" style="left:307.75px;top:631.70px;font-family:'Liberation Sans';font-size:14px;font-weight:400;line-height:18px;height:18px;white-space:pre;color:#000;transform:scaleX(0.9500);transform-origin:0 0;">10</div>
<div class="t" style="left:353.20px;top:631.70px;font-family:'Liberation Sans';font-size:14px;font-weight:400;line-height:18px;height:18px;white-space:pre;color:#000;transform:scaleX(0.8750);transform-origin:0 0;">£</div>
<div class="t" style="left:368.27px;top:631.70px;font-family:'Liberation Sans';font-size:14px;font-weight:400;line-height:18px;height:18px;white-space:pre;color:#000;transform:scaleX(0.9340);transform-origin:0 0;">2,000.00</div>
<div class="t" style="left:428.31px;top:631.70px;font-family:'Liberation Sans';font-size:14px;font-weight:400;line-height:18px;height:18px;white-space:pre;color:#000;transform:scaleX(1.0909);transform-origin:0 0;">-£</div>
<div class="t" style="left:464.47px;top:631.70px;font-family:'Liberation Sans';font-size:14px;font-weight:400;line-height:18px;height:18px;white-space:pre;color:#000;transform:scaleX(0.9268);transform-origin:0 0;">240.00</div>
<div class="t" style="left:519.50px;top:631.70px;font-family:'Liberation Sans';font-size:14px;font-weight:400;line-height:18px;height:18px;white-space:pre;color:#000;transform:scaleX(0.8750);transform-origin:0 0;">£</div>
<div class="t" style="left:553.58px;top:631.70px;font-family:'Liberation Sans';font-size:14px;font-weight:400;line-height:18px;height:18px;white-space:pre;color:#000;transform:scaleX(0.9245);transform-origin:0 0;">1,760.00</div>
<div class="t" style="left:619.50px;top:631.70px;font-family:'Liberation Sans';font-size:14px;font-weight:400;line-height:18px;height:18px;white-space:pre;color:#000;transform:scaleX(0.8500);transform-origin:0 0;">£</div>
<div class="t" style="left:648.47px;top:631.70px;font-family:'Liberation Sans';font-size:14px;font-weight:400;line-height:18px;height:18px;white-space:pre;color:#000;transform:scaleX(0.9293);transform-origin:0 0;">200.00</div>
<div class="t" style="left:703.80px;top:631.70px;font-family:'Liberation Sans';font-size:14px;font-weight:400;line-height:18px;height:18px;white-space:pre;color:#000;transform:scaleX(0.8250);transform-origin:0 0;">£</div>
<div class="t" style="left:731.68px;top:631.70px;font-family:'Liberation Sans';font-size:14px;font-weight:400;line-height:18px;height:18px;white-space:pre;color:#000;transform:scaleX(0.9245);transform-origin:0 0;">1,960.00</div>
<div class="t" style="left:220.07px;top:862.00px;font-family:'Liberation Sans';font-size:14px;font-weight:700;line-height:18px;height:18px;white-space:pre;color:#000;transform:scaleX(0.9323);transform-origin:0 0;">Sub Total:</div>
<div class="t" style="left:306.80px;top:862.00px;font-family:'Liberation Sans';font-size:14px;font-weight:700;line-height:18px;height:18px;white-space:pre;color:#000;">15</div>
<div class="t" style="left:353.00px;top:862.00px;font-family:'Liberation Sans';font-size:14px;font-weight:700;line-height:18px;height:18px;white-space:pre;color:#000;transform:scaleX(0.8750);transform-origin:0 0;">£</div>
<div class="t" style="left:369.00px;top:862.00px;font-family:'Liberation Sans';font-size:14px;font-weight:700;line-height:18px;height:18px;white-space:pre;color:#000;transform:scaleX(0.9241);transform-origin:0 0;">2,825.00</div>
<div class="t" style="left:428.90px;top:862.00px;font-family:'Liberation Sans';font-size:14px;font-weight:700;line-height:18px;height:18px;white-space:pre;color:#000;transform:scaleX(0.9833);transform-origin:0 0;">-£</div>
<div class="t" style="left:465.30px;top:862.00px;font-family:'Liberation Sans';font-size:14px;font-weight:700;line-height:18px;height:18px;white-space:pre;color:#000;transform:scaleX(0.9167);transform-origin:0 0;">240.00</div>
<div class="t" style="left:520.50px;top:862.00px;font-family:'Liberation Sans';font-size:14px;font-weight:700;line-height:18px;height:18px;white-space:pre;color:#000;transform:scaleX(0.8625);transform-origin:0 0;">£</div>
<div class="t" style="left:554.00px;top:862.00px;font-family:'Liberation Sans';font-size:14px;font-weight:700;line-height:18px;height:18px;white-space:pre;color:#000;transform:scaleX(0.9204);transform-origin:0 0;">2,585.00</div>
<div class="t" style="left:620.60px;top:862.00px;font-family:'Liberation Sans';font-size:14px;font-weight:700;line-height:18px;height:18px;white-space:pre;color:#000;transform:scaleX(0.8000);transform-origin:0 0;">£</div>
<div class="t" style="left:649.60px;top:862.00px;font-family:'Liberation Sans';font-size:14px;font-weight:700;line-height:18px;height:18px;white-space:pre;color:#000;transform:scaleX(0.9048);transform-origin:0 0;">300.00</div>
<div class="t" style="left:704.20px;top:862.00px;font-family:'Liberation Sans';font-size:14px;font-weight:700;line-height:18px;height:18px;white-space:pre;color:#000;transform:scaleX(0.8875);transform-origin:0 0;">£</div>
<div class="t" style="left:732.40px;top:862.00px;font-family:'Liberation Sans';font-size:14px;font-weight:700;line-height:18px;height:18px;white-space:pre;color:#000;transform:scaleX(0.9111);transform-origin:0 0;">2,885.00</div>
<div class="t" style="left:53.50px;top:208.00px;font-family:'Liberation Sans';font-size:13px;font-weight:400;line-height:17px;height:17px;white-space:pre;color:#e6e6e6;">A</div>
<div class="t" style="left:132.50px;top:208.00px;font-family:'Liberation Sans';font-size:13px;font-weight:400;line-height:17px;height:17px;white-space:pre;color:#ffffff;">B</div>
<div class="t" style="left:229.50px;top:208.00px;font-family:'Liberation Sans';font-size:13px;font-weight:400;line-height:17px;height:17px;white-space:pre;color:#e6e6e6;">C</div>
<div class="t" style="left:310.50px;top:208.00px;font-family:'Liberation Sans';font-size:13px;font-weight:400;line-height:17px;height:17px;white-space:pre;color:#e6e6e6;">D</div>
<div class="t" style="left:382.00px;top:208.00px;font-family:'Liberation Sans';font-size:13px;font-weight:400;line-height:17px;height:17px;white-space:pre;color:#e6e6e6;">E</div>
<div class="t" style="left:465.00px;top:208.00px;font-family:'Liberation Sans';font-size:13px;font-weight:400;line-height:17px;height:17px;white-space:pre;color:#e6e6e6;">F</div>
<div class="t" style="left:557.00px;top:208.00px;font-family:'Liberation Sans';font-size:13px;font-weight:400;line-height:17px;height:17px;white-space:pre;color:#e6e6e6;">G</div>
<div class="t" style="left:649.00px;top:208.00px;font-family:'Liberation Sans';font-size:13px;font-weight:400;line-height:17px;height:17px;white-space:pre;color:#e6e6e6;">H</div>
<div class="t" style="left:741.00px;top:208.00px;font-family:'Liberation Sans';font-size:13px;font-weight:400;line-height:17px;height:17px;white-space:pre;color:#e6e6e6;">I</div>
<div class="t" style="left:837.00px;top:208.00px;font-family:'Liberation Sans';font-size:13px;font-weight:400;line-height:17px;height:17px;white-space:pre;color:#e6e6e6;">J</div>
<div class="t" style="left:932.50px;top:208.00px;font-family:'Liberation Sans';font-size:13px;font-weight:400;line-height:17px;height:17px;white-space:pre;color:#e6e6e6;">K</div>
<div class="t" style="left:1012.00px;top:208.00px;font-family:'Liberation Sans';font-size:13px;font-weight:400;line-height:17px;height:17px;white-space:pre;color:#e6e6e6;">L</div>
<div class="t" style="left:1074.50px;top:208.00px;font-family:'Liberation Sans';font-size:13px;font-weight:400;line-height:17px;height:17px;white-space:pre;color:#e6e6e6;">M</div>
<div class="t" style="left:1150.00px;top:208.00px;font-family:'Liberation Sans';font-size:13px;font-weight:400;line-height:17px;height:17px;white-space:pre;color:#e6e6e6;">N</div>
<div class="t" style="left:1236.00px;top:208.00px;font-family:'Liberation Sans';font-size:13px;font-weight:400;line-height:17px;height:17px;white-space:pre;color:#e6e6e6;">O</div>
<div class="t" style="left:1331.00px;top:208.00px;font-family:'Liberation Sans';font-size:13px;font-weight:400;line-height:17px;height:17px;white-space:pre;color:#e6e6e6;">P</div>
<div class="t" style="left:1412.50px;top:208.00px;font-family:'Liberation Sans';font-size:13px;font-weight:400;line-height:17px;height:17px;white-space:pre;color:#e6e6e6;">Q</div>
<div class="t" style="left:1477.00px;top:208.00px;font-family:'Liberation Sans';font-size:13px;font-weight:400;line-height:17px;height:17px;white-space:pre;color:#e6e6e6;">R</div>
<div class="t" style="left:1541.50px;top:208.00px;font-family:'Liberation Sans';font-size:13px;font-weight:400;line-height:17px;height:17px;white-space:pre;color:#e6e6e6;">S</div>
<div class="t" style="left:1606.00px;top:208.00px;font-family:'Liberation Sans';font-size:13px;font-weight:400;line-height:17px;height:17px;white-space:pre;color:#e6e6e6;">T</div>
<div class="t" style="left:1669.00px;top:208.00px;font-family:'Liberation Sans';font-size:13px;font-weight:400;line-height:17px;height:17px;white-space:pre;color:#e6e6e6;">U</div>
<div class="t" style="left:1733.50px;top:208.00px;font-family:'Liberation Sans';font-size:13px;font-weight:400;line-height:17px;height:17px;white-space:pre;color:#e6e6e6;">V</div>
<div class="t" style="left:1796.00px;top:208.00px;font-family:'Liberation Sans';font-size:13px;font-weight:400;line-height:17px;height:17px;white-space:pre;color:#e6e6e6;">W</div>
<div class="t" style="left:1861.50px;top:208.00px;font-family:'Liberation Sans';font-size:13px;font-weight:400;line-height:17px;height:17px;white-space:pre;color:#e6e6e6;">X</div>
<div class="t" style="left:9.20px;top:228.00px;font-family:'Liberation Sans';font-size:13px;font-weight:400;line-height:17px;height:17px;white-space:pre;color:#e6e6e6;">1</div>
<div class="t" style="left:9.20px;top:250.00px;font-family:'Liberation Sans';font-size:13px;font-weight:400;line-height:17px;height:17px;white-space:pre;color:#e6e6e6;">2</div>
<div class="t" style="left:9.20px;top:276.00px;font-family:'Liberation Sans';font-size:13px;font-weight:400;line-height:17px;height:17px;white-space:pre;color:#e6e6e6;">3</div>
<div class="t" style="left:9.70px;top:316.00px;font-family:'Liberation Sans';font-size:13px;font-weight:400;line-height:17px;height:17px;white-space:pre;color:#e6e6e6;">4</div>
<div class="t" style="left:9.20px;top:342.00px;font-family:'Liberation Sans';font-size:13px;font-weight:400;line-height:17px;height:17px;white-space:pre;color:#e6e6e6;">5</div>
<div class="t" style="left:9.20px;top:363.00px;font-family:'Liberation Sans';font-size:13px;font-weight:400;line-height:17px;height:17px;white-space:pre;color:#e6e6e6;">6</div>
<div class="t" style="left:9.20px;top:384.00px;font-family:'Liberation Sans';font-size:13px;font-weight:400;line-height:17px;height:17px;white-space:pre;color:#e6e6e6;">7</div>
<div class="t" style="left:9.20px;top:405.00px;font-family:'Liberation Sans';font-size:13px;font-weight:400;line-height:17px;height:17px;white-space:pre;color:#e6e6e6;">8</div>
<div class="t" style="left:9.20px;top:425.00px;font-family:'Liberation Sans';font-size:13px;font-weight:400;line-height:17px;height:17px;white-space:pre;color:#e6e6e6;">9</div>
<div class="t" style="left:5.70px;top:446.00px;font-family:'Liberation Sans';font-size:13px;font-weight:400;line-height:17px;height:17px;white-space:pre;color:#e6e6e6;">10</div>
<div class="t" style="left:6.20px;top:467.00px;font-family:'Liberation Sans';font-size:13px;font-weight:400;line-height:17px;height:17px;white-space:pre;color:#e6e6e6;">11</div>
<div class="t" style="left:5.70px;top:488.00px;font-family:'Liberation Sans';font-size:13px;font-weight:400;line-height:17px;height:17px;white-space:pre;color:#e6e6e6;">12</div>
<div class="t" style="left:5.70px;top:509.00px;font-family:'Liberation Sans';font-size:13px;font-weight:400;line-height:17px;height:17px;white-space:pre;color:#e6e6e6;">13</div>
<div class="t" style="left:5.70px;top:530.00px;font-family:'Liberation Sans';font-size:13px;font-weight:400;line-height:17px;height:17px;white-space:pre;color:#e6e6e6;">14</div>
<div class="t" style="left:5.70px;top:591.00px;font-family:'Liberation Sans';font-size:13px;font-weight:400;line-height:17px;height:17px;white-space:pre;color:#e6e6e6;">15</div>
<div class="t" style="left:5.70px;top:612.00px;font-family:'Liberation Sans';font-size:13px;font-weight:400;line-height:17px;height:17px;white-space:pre;color:#e6e6e6;">16</div>
<div class="t" style="left:5.70px;top:633.00px;font-family:'Liberation Sans';font-size:13px;font-weight:400;line-height:17px;height:17px;white-space:pre;color:#e6e6e6;">17</div>
<div class="t" style="left:5.70px;top:654.00px;font-family:'Liberation Sans';font-size:13px;font-weight:400;line-height:17px;height:17px;white-space:pre;color:#ffffff;">18</div>
<div class="t" style="left:5.70px;top:675.00px;font-family:'Liberation Sans';font-size:13px;font-weight:400;line-height:17px;height:17px;white-space:pre;color:#e6e6e6;">19</div>
<div class="t" style="left:5.70px;top:696.00px;font-family:'Liberation Sans';font-size:13px;font-weight:400;line-height:17px;height:17px;white-space:pre;color:#e6e6e6;">20</div>
<div class="t" style="left:5.70px;top:717.00px;font-family:'Liberation Sans';font-size:13px;font-weight:400;line-height:17px;height:17px;white-space:pre;color:#e6e6e6;">21</div>
<div class="t" style="left:5.70px;top:738.00px;font-family:'Liberation Sans';font-size:13px;font-weight:400;line-height:17px;height:17px;white-space:pre;color:#e6e6e6;">22</div>
<div class="t" style="left:5.70px;top:759.00px;font-family:'Liberation Sans';font-size:13px;font-weight:400;line-height:17px;height:17px;white-space:pre;color:#e6e6e6;">23</div>
<div class="t" style="left:5.70px;top:780.00px;font-family:'Liberation Sans';font-size:13px;font-weight:400;line-height:17px;height:17px;white-space:pre;color:#e6e6e6;">24</div>
<div class="t" style="left:5.70px;top:801.00px;font-family:'Liberation Sans';font-size:13px;font-weight:400;line-height:17px;height:17px;white-space:pre;color:#e6e6e6;">25</div>
<div class="t" style="left:5.70px;top:822.00px;font-family:'Liberation Sans';font-size:13px;font-weight:400;line-height:17px;height:17px;white-space:pre;color:#e6e6e6;">26</div>
<div class="t" style="left:5.70px;top:843.00px;font-family:'Liberation Sans';font-size:13px;font-weight:400;line-height:17px;height:17px;white-space:pre;color:#e6e6e6;">27</div>
<div class="t" style="left:5.70px;top:863.00px;font-family:'Liberation Sans';font-size:13px;font-weight:400;line-height:17px;height:17px;white-space:pre;color:#e6e6e6;">28</div>
<div class="t" style="left:5.70px;top:884.00px;font-family:'Liberation Sans';font-size:13px;font-weight:400;line-height:17px;height:17px;white-space:pre;color:#e6e6e6;">29</div>
<div class="t" style="left:5.70px;top:904.00px;font-family:'Liberation Sans';font-size:13px;font-weight:400;line-height:17px;height:17px;white-space:pre;color:#e6e6e6;">30</div>
<div class="t" style="left:5.70px;top:924.00px;font-family:'Liberation Sans';font-size:13px;font-weight:400;line-height:17px;height:17px;white-space:pre;color:#e6e6e6;">31</div>
<div class="t" style="left:5.70px;top:944.00px;font-family:'Liberation Sans';font-size:13px;font-weight:400;line-height:17px;height:17px;white-space:pre;color:#e6e6e6;">32</div>
<div class="t" style="left:5.70px;top:964.00px;font-family:'Liberation Sans';font-size:13px;font-weight:400;line-height:17px;height:17px;white-space:pre;color:#e6e6e6;">33</div>
<div class="t" style="left:5.70px;top:985.00px;font-family:'Liberation Sans';font-size:13px;font-weight:400;line-height:17px;height:17px;white-space:pre;color:#e6e6e6;">34</div>
<div class="t" style="left:21.00px;top:9.00px;font-family:'Liberation Sans';font-size:12.5px;font-weight:400;line-height:16px;height:16px;white-space:pre;color:#ffffff;transform:scaleX(0.9259);transform-origin:0 0;">AutoSave</div>
<div class="t" style="left:97.00px;top:9.50px;font-family:'Liberation Sans';font-size:11px;font-weight:400;line-height:14px;height:14px;white-space:pre;color:#ffffff;transform:scaleX(0.8667);transform-origin:0 0;">Off</div>
<div class="t" style="left:396.07px;top:8.10px;font-family:'Liberation Sans';font-size:12.5px;font-weight:400;line-height:16px;height:16px;white-space:pre;color:#ffffff;transform:scaleX(0.9270);transform-origin:0 0;">Kinsman-14088019-A1-4AAD0012-2016.xlsm</div>
<div class="t" style="left:835.09px;top:9.20px;font-family:'Liberation Sans';font-size:12.5px;font-weight:400;line-height:16px;height:16px;white-space:pre;color:#ffffff;transform:scaleX(0.9132);transform-origin:0 0;">Search</div>
<div class="t" style="left:1599.00px;top:9.50px;font-family:'Liberation Sans';font-size:13px;font-weight:400;line-height:17px;height:17px;white-space:pre;color:#ffffff;transform:scaleX(0.9122);transform-origin:0 0;">Andrew Kinsman</div>
<div class="t" style="left:16.48px;top:41.40px;font-family:'Liberation Sans';font-size:13.5px;font-weight:400;line-height:18px;height:18px;white-space:pre;color:#ffffff;transform:scaleX(0.9150);transform-origin:0 0;">File</div>
<div class="t" style="left:132.34px;top:41.40px;font-family:'Liberation Sans';font-size:13.5px;font-weight:400;line-height:18px;height:18px;white-space:pre;color:#ffffff;transform:scaleX(0.9636);transform-origin:0 0;">Insert</div>
<div class="t" style="left:195.36px;top:41.40px;font-family:'Liberation Sans';font-size:13.5px;font-weight:400;line-height:18px;height:18px;white-space:pre;color:#ffffff;transform:scaleX(0.9413);transform-origin:0 0;">Page Layout</div>
<div class="t" style="left:296.25px;top:41.40px;font-family:'Liberation Sans';font-size:13.5px;font-weight:400;line-height:18px;height:18px;white-space:pre;color:#ffffff;transform:scaleX(0.9509);transform-origin:0 0;">Formulas</div>
<div class="t" style="left:378.05px;top:41.40px;font-family:'Liberation Sans';font-size:13.5px;font-weight:400;line-height:18px;height:18px;white-space:pre;color:#ffffff;transform:scaleX(0.9464);transform-origin:0 0;">Data</div>
<div class="t" style="left:434.07px;top:41.40px;font-family:'Liberation Sans';font-size:13.5px;font-weight:400;line-height:18px;height:18px;white-space:pre;color:#ffffff;transform:scaleX(0.9302);transform-origin:0 0;">Review</div>
<div class="t" style="left:503.00px;top:41.40px;font-family:'Liberation Sans';font-size:13.5px;font-weight:400;line-height:18px;height:18px;white-space:pre;color:#ffffff;transform:scaleX(0.9310);transform-origin:0 0;">View</div>
<div class="t" style="left:556.98px;top:41.40px;font-family:'Liberation Sans';font-size:13.5px;font-weight:400;line-height:18px;height:18px;white-space:pre;color:#ffffff;transform:scaleX(1.0231);transform-origin:0 0;">Help</div>
<div class="t" style="left:67.38px;top:41.40px;font-family:'Liberation Sans';font-size:13.5px;font-weight:700;line-height:18px;height:18px;white-space:pre;color:#ffffff;transform:scaleX(1.0167);transform-origin:0 0;">Home</div>
<div class="t" style="left:1755.00px;top:41.75px;font-family:'Liberation Sans';font-size:12.7px;font-weight:700;line-height:17px;height:17px;white-space:pre;color:#ffffff;">Share</div>
<div class="t" style="left:1832.00px;top:41.75px;font-family:'Liberation Sans';font-size:12.7px;font-weight:700;line-height:17px;height:17px;white-space:pre;color:#ffffff;transform:scaleX(1.0154);transform-origin:0 0;">Comments</div>
<div class="t" style="left:47.45px;top:144.75px;font-family:'Liberation Sans';font-size:11.5px;font-weight:400;line-height:15px;height:15px;white-space:pre;color:#f0f0f0;transform:scaleX(1.0469);transform-origin:0 0;">Clipboard</div>
<div class="t" style="left:259.55px;top:144.75px;font-family:'Liberation Sans';font-size:11.5px;font-weight:400;line-height:15px;height:15px;white-space:pre;color:#f0f0f0;transform:scaleX(1.0523);transform-origin:0 0;">Font</div>
<div class="t" style="left:502.00px;top:144.75px;font-family:'Liberation Sans';font-size:11.5px;font-weight:400;line-height:15px;height:15px;white-space:pre;color:#f0f0f0;transform:scaleX(1.0392);transform-origin:0 0;">Alignment</div>
<div class="t" style="left:725.49px;top:144.75px;font-family:'Liberation Sans';font-size:11.5px;font-weight:400;line-height:15px;height:15px;white-space:pre;color:#f0f0f0;transform:scaleX(1.0125);transform-origin:0 0;">Number</div>
<div class="t" style="left:1113.05px;top:144.75px;font-family:'Liberation Sans';font-size:11.5px;font-weight:400;line-height:15px;height:15px;white-space:pre;color:#f0f0f0;transform:scaleX(0.9500);transform-origin:0 0;">Styles</div>
<div class="t" style="left:1484.64px;top:144.75px;font-family:'Liberation Sans';font-size:11.5px;font-weight:400;line-height:15px;height:15px;white-space:pre;color:#f0f0f0;transform:scaleX(0.9646);transform-origin:0 0;">Cells</div>
<div class="t" style="left:1649.53px;top:144.75px;font-family:'Liberation Sans';font-size:11.5px;font-weight:400;line-height:15px;height:15px;white-space:pre;color:#f0f0f0;transform:scaleX(1.0706);transform-origin:0 0;">Editing</div>
<div class="t" style="left:1779.00px;top:144.75px;font-family:'Liberation Sans';font-size:11.5px;font-weight:400;line-height:15px;height:15px;white-space:pre;color:#f0f0f0;transform:scaleX(0.9643);transform-origin:0 0;">Analysis</div>
<div class="t" style="left:14.69px;top:105.00px;font-family:'Liberation Sans';font-size:12.3px;font-weight:400;line-height:16px;height:16px;white-space:pre;color:#ffffff;transform:scaleX(0.9133);transform-origin:0 0;">Paste</div>
<div class="t" style="left:70.94px;top:72.25px;font-family:'Liberation Sans';font-size:12.3px;font-weight:400;line-height:16px;height:16px;white-space:pre;color:#ffffff;transform:scaleX(1.0556);transform-origin:0 0;">Cut</div>
<div class="t" style="left:71.00px;top:95.60px;font-family:'Liberation Sans';font-size:12.3px;font-weight:400;line-height:16px;height:16px;white-space:pre;color:#ffffff;">Copy</div>
<div class="t" style="left:71.53px;top:119.75px;font-family:'Liberation Sans';font-size:12.3px;font-weight:400;line-height:16px;height:16px;white-space:pre;color:#ffffff;transform:scaleX(0.9688);transform-origin:0 0;">Format Painter</div>
<div class="t" style="left:174.97px;top:80.00px;font-family:'Liberation Sans';font-size:12.3px;font-weight:400;line-height:16px;height:16px;white-space:pre;color:#ffffff;transform:scaleX(1.0303);transform-origin:0 0;">Calibri</div>
<div class="t" style="left:300.00px;top:80.00px;font-family:'Liberation Sans';font-size:12.3px;font-weight:400;line-height:16px;height:16px;white-space:pre;color:#ffffff;">11</div>
<div class="t" style="left:561.00px;top:80.00px;font-family:'Liberation Sans';font-size:12.3px;font-weight:400;line-height:16px;height:16px;white-space:pre;color:#ffffff;transform:scaleX(0.9455);transform-origin:0 0;">Wrap Text</div>
<div class="t" style="left:560.01px;top:111.90px;font-family:'Liberation Sans';font-size:12.3px;font-weight:400;line-height:16px;height:16px;white-space:pre;color:#ffffff;transform:scaleX(0.9884);transform-origin:0 0;">Merge &amp; Center</div>
<div class="t" style="left:687.82px;top:80.00px;font-family:'Liberation Sans';font-size:12.3px;font-weight:400;line-height:16px;height:16px;white-space:pre;color:#ffffff;transform:scaleX(0.9286);transform-origin:0 0;">General</div>
<div class="t" style="left:846.48px;top:104.60px;font-family:'Liberation Sans';font-size:12.3px;font-weight:400;line-height:16px;height:16px;white-space:pre;color:#ffffff;transform:scaleX(1.0208);transform-origin:0 0;">Conditional</div>
<div class="t" style="left:842.48px;top:121.00px;font-family:'Liberation Sans';font-size:12.3px;font-weight:400;line-height:16px;height:16px;white-space:pre;color:#ffffff;transform:scaleX(1.0175);transform-origin:0 0;">Formatting</div>
<div class="t" style="left:917.55px;top:104.60px;font-family:'Liberation Sans';font-size:12.3px;font-weight:400;line-height:16px;height:16px;white-space:pre;color:#ffffff;transform:scaleX(0.9537);transform-origin:0 0;">Format as</div>
<div class="t" style="left:926.00px;top:121.00px;font-family:'Liberation Sans';font-size:12.3px;font-weight:400;line-height:16px;height:16px;white-space:pre;color:#ffffff;transform:scaleX(0.8966);transform-origin:0 0;">Table</div>
<div class="t" style="left:1439.65px;top:104.60px;font-family:'Liberation Sans';font-size:12.3px;font-weight:400;line-height:16px;height:16px;white-space:pre;color:#ffffff;transform:scaleX(0.9467);transform-origin:0 0;">Insert</div>
<div class="t" style="left:1479.65px;top:104.60px;font-family:'Liberation Sans';font-size:12.3px;font-weight:400;line-height:16px;height:16px;white-space:pre;color:#ffffff;transform:scaleX(0.9529);transform-origin:0 0;">Delete</div>
<div class="t" style="left:1519.62px;top:104.60px;font-family:'Liberation Sans';font-size:12.3px;font-weight:400;line-height:16px;height:16px;white-space:pre;color:#ffffff;transform:scaleX(0.9842);transform-origin:0 0;">Format</div>
<div class="t" style="left:1599.00px;top:70.60px;font-family:'Liberation Sans';font-size:12.3px;font-weight:400;line-height:16px;height:16px;white-space:pre;color:#ffffff;transform:scaleX(0.9900);transform-origin:0 0;">AutoSum</div>
<div class="t" style="left:1597.93px;top:93.75px;font-family:'Liberation Sans';font-size:12.3px;font-weight:400;line-height:16px;height:16px;white-space:pre;color:#ffffff;transform:scaleX(1.0714);transform-origin:0 0;">Fill</div>
<div class="t" style="left:1598.04px;top:116.50px;font-family:'Liberation Sans';font-size:12.3px;font-weight:400;line-height:16px;height:16px;white-space:pre;color:#ffffff;transform:scaleX(0.9643);transform-origin:0 0;">Clear</div>
<div class="t" style="left:1674.97px;top:104.60px;font-family:'Liberation Sans';font-size:12.3px;font-weight:400;line-height:16px;height:16px;white-space:pre;color:#ffffff;transform:scaleX(1.0303);transform-origin:0 0;">Sort &amp;</div>
<div class="t" style="left:1673.00px;top:121.00px;font-family:'Liberation Sans';font-size:12.3px;font-weight:400;line-height:16px;height:16px;white-space:pre;color:#ffffff;">Filter</div>
<div class="t" style="left:1717.94px;top:104.60px;font-family:'Liberation Sans';font-size:12.3px;font-weight:400;line-height:16px;height:16px;white-space:pre;color:#ffffff;transform:scaleX(1.0588);transform-origin:0 0;">Find &amp;</div>
<div class="t" style="left:1715.06px;top:121.00px;font-family:'Liberation Sans';font-size:12.3px;font-weight:400;line-height:16px;height:16px;white-space:pre;color:#ffffff;transform:scaleX(0.9394);transform-origin:0 0;">Select</div>
<div class="t" style="left:1779.00px;top:105.00px;font-family:'Liberation Sans';font-size:12.3px;font-weight:400;line-height:16px;height:16px;white-space:pre;color:#ffffff;transform:scaleX(0.9535);transform-origin:0 0;">Analyze</div>
<div class="t" style="left:1787.56px;top:120.60px;font-family:'Liberation Sans';font-size:12.3px;font-weight:400;line-height:16px;height:16px;white-space:pre;color:#ffffff;transform:scaleX(0.9400);transform-origin:0 0;">Data</div>
<div class="t" style="left:981.44px;top:77.75px;font-family:'Liberation Sans';font-size:13.5px;font-weight:400;line-height:18px;height:18px;white-space:pre;color:#000;transform:scaleX(1.0595);transform-origin:0 0;">Normal</div>
<div class="t" style="left:1087.78px;top:77.75px;font-family:'Liberation Sans';font-size:13.5px;font-weight:400;line-height:18px;height:18px;white-space:pre;color:#9c0006;transform:scaleX(0.9659);transform-origin:0 0;">Bad</div>
<div class="t" style="left:1192.97px;top:77.75px;font-family:'Liberation Sans';font-size:13.5px;font-weight:400;line-height:18px;height:18px;white-space:pre;color:#006100;transform:scaleX(1.0323);transform-origin:0 0;">Good</div>
<div class="t" style="left:1299.52px;top:77.75px;font-family:'Liberation Sans';font-size:13.5px;font-weight:400;line-height:18px;height:18px;white-space:pre;color:#9c5700;transform:scaleX(1.0810);transform-origin:0 0;">Neutral</div>
<div class="t" style="left:982.00px;top:105.90px;font-family:'Liberation Sans';font-size:13.5px;font-weight:700;line-height:18px;height:18px;white-space:pre;color:#fa7d00;transform:scaleX(0.9444);transform-origin:0 0;">Calculation</div>
<div class="t" style="left:1088.50px;top:106.00px;font-family:'Liberation Sans';font-size:13.5px;font-weight:700;line-height:18px;height:18px;white-space:pre;color:#ffffff;transform:scaleX(0.9338);transform-origin:0 0;">Check Cell</div>
<div class="t" style="left:1194.00px;top:106.00px;font-family:'Liberation Sans';font-size:13.5px;font-weight:400;line-height:18px;height:18px;white-space:pre;font-style:italic;color:#7f7f7f;transform:scaleX(1.0353);transform-origin:0 0;">Explanatory ...</div>
<div class="t" style="left:1299.52px;top:106.00px;font-family:'Liberation Sans';font-size:13.5px;font-weight:400;line-height:18px;height:18px;white-space:pre;color:#954f72;transform:scaleX(1.0750);transform-origin:0 0;">Followed Hy...</div>
<div class="t" style="left:10.95px;top:176.60px;font-family:'Liberation Sans';font-size:12.5px;font-weight:400;line-height:16px;height:16px;white-space:pre;color:#ffffff;transform:scaleX(1.0476);transform-origin:0 0;">B18</div>
<div class="t" style="left:1884.29px;top:1021.00px;font-family:'Liberation Sans';font-size:12px;font-weight:400;line-height:16px;height:16px;white-space:pre;color:#ffffff;transform:scaleX(0.9103);transform-origin:0 0;">100%</div>
<div class="t" style="left:110.99px;top:996.00px;font-family:'Liberation Sans';font-size:12.5px;font-weight:700;line-height:16px;height:16px;white-space:pre;color:#1d6b3f;transform:scaleX(1.0125);transform-origin:0 0;">Sheet3</div>
<div class="t" style="left:176.99px;top:996.00px;font-family:'Liberation Sans';font-size:12.5px;font-weight:400;line-height:16px;height:16px;white-space:pre;color:#ffffff;transform:scaleX(1.0079);transform-origin:0 0;">Sheet2</div>
<div class="t" style="left:222.00px;top:173.50px;font-family:'Liberation Serif';font-size:15px;font-weight:700;line-height:20px;height:20px;white-space:pre;font-style:italic;color:#ffffff;transform:scaleX(1.0833);transform-origin:0 0;">f</div>
<div class="t" style="left:227.50px;top:179.50px;font-family:'Liberation Serif';font-size:10px;font-weight:700;line-height:13px;height:13px;white-space:pre;font-style:italic;color:#ffffff;transform:scaleX(1.3000);transform-origin:0 0;">x</div>
<div class="t" style="left:179.00px;top:110.00px;font-family:'Liberation Sans';font-size:13px;font-weight:700;line-height:17px;height:17px;white-space:pre;color:#d8d8d8;">B</div>
<div class="t" style="left:203.50px;top:110.00px;font-family:'Liberation Serif';font-size:13.5px;font-weight:400;line-height:18px;height:18px;white-space:pre;font-style:italic;color:#d8d8d8;transform:scaleX(1.5000);transform-origin:0 0;">I</div>
<div class="t" style="left:225.77px;top:110.00px;font-family:'Liberation Sans';font-size:12.5px;font-weight:400;line-height:16px;height:16px;white-space:pre;color:#d8d8d8;transform:scaleX(1.2286);transform-origin:0 0;">U</div>
<div class="t" style="left:1766.08px;top:1042.50px;font-family:'Liberation Sans';font-size:12px;font-weight:400;line-height:16px;height:16px;white-space:pre;color:#e8e8e8;transform:scaleX(0.9167);transform-origin:0 0;">ENG</div>
<div class="t" style="left:1817.10px;top:1042.50px;font-family:'Liberation Sans';font-size:12px;font-weight:400;line-height:16px;height:16px;white-space:pre;color:#e8e8e8;transform:scaleX(0.8966);transform-origin:0 0;">15:33</div>
<div class="r" style="left:1915px;top:1040px;width:1px;height:8px;background:#555"></div>
<div class="r" style="left:88px;top:650px;width:96px;height:23px;border:2px solid #217346;box-sizing:border-box;"></div>
<div class="r" style="left:181px;top:670px;width:5px;height:5px;background:#217346;"></div>
<div class="r" style="left:0;top:990px;width:100px;height:28px;background:#262626;border-top:1px solid #181818;box-sizing:border-box"></div>
<svg class="r" style="left:0;top:0" width="1928" height="1048" viewBox="0 0 1928 1048"><rect x="78.5" y="8.5" width="37" height="15" fill="none" stroke="#ffffff" stroke-width="1.1" rx="7.5"/><circle cx="85.8" cy="16" r="3.4" fill="#fff"/><path d="M129.5 10.5 H142 L144.5 13 V25.5 H129.5 Z" stroke="#ffffff" stroke-width="1.1" fill="none" /><path d="M132.5 10.5 V15.5 H141.5 V10.5" stroke="#ffffff" stroke-width="1.1" fill="none" /><path d="M132.5 25.5 V19.5 H141.5 V25.5" stroke="#ffffff" stroke-width="1.1" fill="none" /><path d="M159.5 11 V16.5 H165" stroke="#7a7a7a" stroke-width="1.2" fill="none" /><path d="M159.8 16.3 C163 12,171 11.5,172.6 17.5 C173.8 22,170.5 24.5,166.5 25.8" stroke="#7a7a7a" stroke-width="1.2" fill="none" /><path d="M180 15.2 L182.8 18 L185.6 15.2" stroke="#7a7a7a" stroke-width="1" fill="none" /><path d="M212.5 11 V16.5 H207" stroke="#7a7a7a" stroke-width="1.2" fill="none" /><path d="M212.2 16.3 C209 12,201 11.5,199.4 17.5 C198.2 22,201.5 24.5,205.5 25.8" stroke="#7a7a7a" stroke-width="1.2" fill="none" /><path d="M219 15.2 L221.8 18 L224.6 15.2" stroke="#7a7a7a" stroke-width="1" fill="none" /><path d="M240 14.5 H247" stroke="#ffffff" stroke-width="1" fill="none" /><path d="M240.5 16.8 L243.5 19.8 L246.5 16.8" stroke="#ffffff" stroke-width="1.1" fill="none" /><path d="M638 15 H643.5 L640.75 18 Z" stroke="none" stroke-width="0" fill="#ffffff" /><circle cx="816" cy="14.3" r="4.4" fill="none" stroke="#fff" stroke-width="1.2"/><path d="M812.8 17.6 L806.5 23.8" stroke="#ffffff" stroke-width="1.3" fill="none" /><defs><radialGradient id="avg" cx="0.5" cy="0.5" r="0.5"><stop offset="0.55" stop-color="#ffffff"/><stop offset="0.8" stop-color="#a8ccf2"/><stop offset="1" stop-color="#2f7fdc"/></radialGradient></defs><circle cx="1712" cy="17" r="12" fill="url(#avg)"/><path d="M1704.5 13 C1704 8,1708 6.5,1711 6.8 C1715 7,1717.8 9,1717.6 13.5 L1717.6 25 C1715 27.5,1711 28,1709 26 C1706 23,1704.5 20,1704.3 17 Z" stroke="none" stroke-width="0" fill="#efc4a0" /><path d="M1704.3 17 C1703.8 9,1708 6.6,1711.5 6.8 C1715.5 7,1718 9.5,1717.6 14.5 C1716 12.5,1713 12,1710 12.3 C1708 12.6,1706.5 13.5,1705.5 17.5 Z" stroke="none" stroke-width="0" fill="#6a4630" /><path d="M1709.5 23.3 C1710 27,1715 27.2,1716.5 23.5 L1716 21.5 C1714 23,1711.5 23,1709.8 21.5 Z" stroke="none" stroke-width="0" fill="#4a2e1e" /><ellipse cx="1709.6" cy="18.8" rx="0.9" ry="0.8" fill="#222"/><ellipse cx="1714.6" cy="18.8" rx="0.9" ry="0.8" fill="#222"/><path d="M1708 16.3 H1710.8 M1713.5 16.3 H1716" stroke="#6a4630" stroke-width="0.8" fill="none" /><rect x="1752.5" y="11.5" width="12" height="10" fill="none" stroke="#ffffff" stroke-width="1" /><path d="M1752.5 13.5 H1764.5" stroke="#ffffff" stroke-width="1" fill="none" /><path d="M1758.5 20.5 V15.5 M1756 18 L1758.5 15.5 L1761 18" stroke="#ffffff" stroke-width="1" fill="none" /><path d="M1800 16.5 H1810.5" stroke="#ffffff" stroke-width="1" fill="none" /><rect x="1845.5" y="13.5" width="8" height="8" fill="none" stroke="#ffffff" stroke-width="1" /><path d="M1847.5 13.5 V11.5 H1855.5 V19.5 H1853.5" stroke="#ffffff" stroke-width="1" fill="none" /><path d="M1891.5 11 L1902 21.5 M1902 11 L1891.5 21.5" stroke="#ffffff" stroke-width="1.2" fill="none" /><path d="M1745 48 H1740 V55 H1751 V51" stroke="#ffffff" stroke-width="1" fill="none" /><path d="M1744 52 C1744 47,1747 45.5,1750.5 45.5 M1748.5 43.2 L1751.2 45.5 L1748.5 47.8" stroke="#ffffff" stroke-width="1.1" fill="none" /><path d="M1816.5 44.5 H1827.5 V51.5 H1821 L1818.5 54 V51.5 H1816.5 Z" stroke="#ffffff" stroke-width="1" fill="none" /><path d="M164.5 68 V155" stroke="#4a4a4a" stroke-width="1" fill="none" /><path d="M396 68 V155" stroke="#4a4a4a" stroke-width="1" fill="none" /><path d="M676.5 68 V155" stroke="#4a4a4a" stroke-width="1" fill="none" /><path d="M832.5 68 V155" stroke="#4a4a4a" stroke-width="1" fill="none" /><path d="M1425.5 68 V155" stroke="#4a4a4a" stroke-width="1" fill="none" /><path d="M1568.5 68 V155" stroke="#4a4a4a" stroke-width="1" fill="none" /><path d="M1768.5 68 V155" stroke="#4a4a4a" stroke-width="1" fill="none" /><path d="M1830.5 68 V155" stroke="#4a4a4a" stroke-width="1" fill="none" /><path d="M534.5 74 V133" stroke="#4a4a4a" stroke-width="1" fill="none" /><path d="M262.5 109.5 V129.5" stroke="#4a4a4a" stroke-width="1" fill="none" /><path d="M308.5 109.5 V129.5" stroke="#4a4a4a" stroke-width="1" fill="none" /><path d="M479.5 77 V97.5" stroke="#4a4a4a" stroke-width="1" fill="none" /><path d="M479.5 109 V129.5" stroke="#4a4a4a" stroke-width="1" fill="none" /><path d="M774 109 V129.5" stroke="#4a4a4a" stroke-width="1" fill="none" /><path d="M153.0 153 V148.5 H157.5" stroke="#dcdcdc" stroke-width="1" fill="none" /><path d="M155.0 150.5 L160.0 155.5 M160.0 152 V155.5 H156.5" stroke="#dcdcdc" stroke-width="1" fill="none" /><path d="M385.5 153 V148.5 H390" stroke="#dcdcdc" stroke-width="1" fill="none" /><path d="M387.5 150.5 L392.5 155.5 M392.5 152 V155.5 H389" stroke="#dcdcdc" stroke-width="1" fill="none" /><path d="M665.5 153 V148.5 H670" stroke="#dcdcdc" stroke-width="1" fill="none" /><path d="M667.5 150.5 L672.5 155.5 M672.5 152 V155.5 H669" stroke="#dcdcdc" stroke-width="1" fill="none" /><path d="M821.5 153 V148.5 H826" stroke="#dcdcdc" stroke-width="1" fill="none" /><path d="M823.5 150.5 L828.5 155.5 M828.5 152 V155.5 H825" stroke="#dcdcdc" stroke-width="1" fill="none" /><path d="M1901.5 156 L1906.5 151.5 L1911.5 156" stroke="#ffffff" stroke-width="1.2" fill="none" /><path d="M22.5 77.5 H19.5 V98 H31" stroke="#f0a030" stroke-width="2.6" fill="none" /><path d="M34.5 77.5 H37.5 V83.5" stroke="#f0a030" stroke-width="2.6" fill="none" /><path d="M22.3 79.5 V76.3 H25.3 C25.6 72.3,31.6 72.3,31.9 76.3 H34.8 V79.5 Z" stroke="#c8c8c8" stroke-width="1.1" fill="#32312f" /><rect x="31.5" y="84.5" width="13.5" height="17.5" fill="#32312f" stroke="#e0e0e0" stroke-width="1.2" /><path d="M26 127 L29.0 130 L32 127" stroke="#ffffff" stroke-width="1.2" fill="none" /><path d="M57 71.5 L63.8 83.5 M65 71.5 L58.2 83.5" stroke="#d8d8d8" stroke-width="1.1" fill="none" /><circle cx="57.8" cy="85" r="1.9" fill="none" stroke="#3b9ae1" stroke-width="1.2"/><circle cx="63.8" cy="85" r="1.9" fill="none" stroke="#3b9ae1" stroke-width="1.2"/><path d="M61 97 V95.5 H53.5 V108.5 H59" stroke="#d8d8d8" stroke-width="1" fill="none" /><path d="M60 99.5 H65 L68.5 103 V110.5 H60 Z M65 99.5 V103 H68.5" stroke="#d8d8d8" stroke-width="1" fill="none" /><path d="M62 105.5 H66 M62 107.5 H66" stroke="#b0b0b0" stroke-width="0.8" fill="none" /><path d="M110 101.8 L113.5 105 L117 101.8" stroke="#ffffff" stroke-width="1.2" fill="none" /><path d="M53.6 126.4 L61.2 122.3 L65.8 127.8 L59.6 133.4 Z" stroke="#f0b040" stroke-width="1.1" fill="#32312f" /><path d="M56.5 130.3 L65.2 128.2 L59.6 133.4 Z" stroke="none" stroke-width="0" fill="#f0a030" /><path d="M59.8 123.2 L62.6 120.6 L67.4 125.4 L64.8 128 Z" stroke="#d8d8d8" stroke-width="1.1" fill="#32312f" /><path d="M62.6 121 L67.2 116.8 L69.6 119.2 L65.4 123.6" stroke="#d8d8d8" stroke-width="1.3" fill="#32312f" /><path d="M286 86.2 L289.25 89.8 L292.5 86.2" stroke="#ffffff" stroke-width="1.2" fill="none" /><path d="M331 86.2 L334.25 89.8 L337.5 86.2" stroke="#ffffff" stroke-width="1.2" fill="none" /><path d="M347.5 92 L352.5 79.5 L357.5 92 M349.3 87.5 H355.7" stroke="#e0e0e0" stroke-width="1.3" fill="none" /><path d="M357.5 83 L359.7 80.5 L362 83" stroke="#3b9ae1" stroke-width="1" fill="none" /><path d="M372.7 92 L376.75 82.8 L380.8 92 M374.2 88.6 H379.3" stroke="#e0e0e0" stroke-width="1.2" fill="none" /><path d="M381.3 80.5 L383.5 83 L385.8 80.5" stroke="#3b9ae1" stroke-width="1" fill="none" /><path d="M246 117.8 L249.25 121.2 L252.5 117.8" stroke="#ffffff" stroke-width="1.2" fill="none" /><path d="M292.5 117.8 L295.75 121.2 L299 117.8" stroke="#ffffff" stroke-width="1.2" fill="none" /><path d="M338 117.8 L341.5 121.2 L345 117.8" stroke="#ffffff" stroke-width="1.2" fill="none" /><path d="M377 117.8 L380.5 121.2 L384 117.8" stroke="#ffffff" stroke-width="1.2" fill="none" /><rect x="270.5" y="111.5" width="14" height="14" fill="none" stroke="#c8c8c8" stroke-width="1" stroke-dasharray="1 1"/><path d="M277.5 111.5 V125 M270.5 118.5 H284.5" stroke="#c8c8c8" stroke-width="1" fill="none" stroke-dasharray="1 1"/><path d="M270 125.5 H285" stroke="#ffffff" stroke-width="1.5" fill="none" /><path d="M320 117 L325.5 111.5 L330.5 116.5 L325 121 Z" stroke="#e8e8e8" stroke-width="1.1" fill="none" /><path d="M323.5 113 L322 110.8" stroke="#e8e8e8" stroke-width="1" fill="none" /><path d="M329.5 114 C331 115,331.5 117,330.8 119" stroke="#3b9ae1" stroke-width="1.4" fill="none" /><rect x="316" y="123" width="16" height="4" fill="#ffff00" stroke="none" stroke-width="1" /><path d="M358.5 121 L363 111 L367.5 121 M360.2 117.6 H365.8" stroke="#e0e0e0" stroke-width="1.3" fill="none" /><rect x="355" y="123" width="16" height="4" fill="#ff0000" stroke="none" stroke-width="1" /><path d="M408.75 79.5 H423" stroke="#dcdcdc" stroke-width="1" fill="none" /><path d="M411 83.5 H421" stroke="#dcdcdc" stroke-width="1" fill="none" /><path d="M408.75 87.5 H423" stroke="#dcdcdc" stroke-width="1" fill="none" /><path d="M433 82.5 H447" stroke="#dcdcdc" stroke-width="1" fill="none" /><path d="M434.5 86.5 H446" stroke="#dcdcdc" stroke-width="1" fill="none" /><path d="M433 90.5 H447" stroke="#dcdcdc" stroke-width="1" fill="none" /><rect x="453.5" y="76.5" width="21" height="22" fill="#5a5a5a" stroke="#7c7c7c" stroke-width="1" /><path d="M457 86.5 H471" stroke="#dcdcdc" stroke-width="1" fill="none" /><path d="M459.5 90.5 H469" stroke="#dcdcdc" stroke-width="1" fill="none" /><path d="M457 94.5 H471" stroke="#dcdcdc" stroke-width="1" fill="none" /><rect x="429.5" y="108.5" width="21" height="22" fill="#5a5a5a" stroke="#7c7c7c" stroke-width="1" /><path d="M409 112.5 H423" stroke="#dcdcdc" stroke-width="1" fill="none" /><path d="M409 116.5 H419" stroke="#dcdcdc" stroke-width="1" fill="none" /><path d="M409 120.5 H423" stroke="#dcdcdc" stroke-width="1" fill="none" /><path d="M409 124.5 H419" stroke="#dcdcdc" stroke-width="1" fill="none" /><path d="M433 112.5 H447" stroke="#dcdcdc" stroke-width="1" fill="none" /><path d="M435 116.5 H445" stroke="#dcdcdc" stroke-width="1" fill="none" /><path d="M433 120.5 H447" stroke="#dcdcdc" stroke-width="1" fill="none" /><path d="M435 124.5 H445" stroke="#dcdcdc" stroke-width="1" fill="none" /><path d="M457 112.5 H471" stroke="#dcdcdc" stroke-width="1" fill="none" /><path d="M461 116.5 H471" stroke="#dcdcdc" stroke-width="1" fill="none" /><path d="M457 120.5 H471" stroke="#dcdcdc" stroke-width="1" fill="none" /><path d="M461 124.5 H471" stroke="#dcdcdc" stroke-width="1" fill="none" /><path d="M488 112.5 H502" stroke="#dcdcdc" stroke-width="1" fill="none" /><path d="M496 116.5 H502" stroke="#dcdcdc" stroke-width="1" fill="none" /><path d="M496 120.5 H502" stroke="#dcdcdc" stroke-width="1" fill="none" /><path d="M488 124.5 H502" stroke="#dcdcdc" stroke-width="1" fill="none" /><path d="M494 118.5 H488.5 M491 116 L488.5 118.5 L491 121" stroke="#3b9ae1" stroke-width="1.2" fill="none" /><path d="M511.6 112.5 H526" stroke="#dcdcdc" stroke-width="1" fill="none" /><path d="M520 116.5 H526" stroke="#dcdcdc" stroke-width="1" fill="none" /><path d="M520 120.5 H526" stroke="#dcdcdc" stroke-width="1" fill="none" /><path d="M511.6 124.5 H526" stroke="#dcdcdc" stroke-width="1" fill="none" /><path d="M511.6 118.5 H517 M514.5 116 L517 118.5 L514.5 121" stroke="#3b9ae1" stroke-width="1.2" fill="none" /><text x="0" y="0" transform="translate(491.5 92) rotate(-50)" font-family="Liberation Sans" font-size="9" fill="#e0e0e0">ab</text><path d="M492 94 L502.5 83.5 M498.5 83.3 H502.7 V87.5" stroke="#3b9ae1" stroke-width="1.2" fill="none" /><path d="M507 86 L510.5 89 L514 86" stroke="#ffffff" stroke-width="1.2" fill="none" /><text x="544" y="87" font-family="Liberation Sans" font-size="9" fill="#d8d8d8">ab</text><text x="544" y="95" font-family="Liberation Sans" font-size="9" fill="#d8d8d8">c</text><path d="M555 87 C559 88,559 93.5,554.5 93.5 H550 M552.5 91 L550 93.5 L552.5 96" stroke="#3b9ae1" stroke-width="1.2" fill="none" /><rect x="542.5" y="111.5" width="14.5" height="14.5" fill="none" stroke="#d8d8d8" stroke-width="1" /><path d="M549.75 111.5 V115.5 M549.75 122 V126" stroke="#d8d8d8" stroke-width="1" fill="none" /><rect x="542.5" y="115.5" width="14.5" height="6.5" fill="#32312f" stroke="#3b9ae1" stroke-width="1.2" /><path d="M545 118.7 H554.5 M547 117 L545 118.7 L547 120.5 M552.5 117 L554.5 118.7 L552.5 120.5" stroke="#3b9ae1" stroke-width="1" fill="none" /><path d="M656 118.2 L659.25 121.2 L662.5 118.2" stroke="#ffffff" stroke-width="1.2" fill="none" /><path d="M815 86.2 L818.5 89.8 L822 86.2" stroke="#ffffff" stroke-width="1.2" fill="none" /><rect x="688.5" y="114.5" width="15" height="9" fill="none" stroke="#d8d8d8" stroke-width="1" /><path d="M691 117 H697 M691 120 H695" stroke="#d8d8d8" stroke-width="1" fill="none" /><rect x="697.5" y="119.5" width="6.5" height="7.5" fill="#2e2e2e" stroke="#e8a33c" stroke-width="1" rx="1.5"/><path d="M697.5 122 H704 M697.5 124.5 H704" stroke="#e8a33c" stroke-width="0.8" fill="none" /><path d="M710 117.8 L713.5 121.2 L717 117.8" stroke="#ffffff" stroke-width="1.2" fill="none" /><circle cx="729.5" cy="115" r="2.3" fill="none" stroke="#e0e0e0" stroke-width="1.1"/><circle cx="740" cy="123" r="2.3" fill="none" stroke="#e0e0e0" stroke-width="1.1"/><path d="M741 112.5 L728 125.5" stroke="#e0e0e0" stroke-width="1.1" fill="none" /><path d="M758.5 117 C761.5 116,763.5 118,762.5 121 C761.5 123.5,759 125,756 125.5" stroke="#d0d0d0" stroke-width="2.2" fill="none" /><circle cx="759" cy="117.2" r="2.6" fill="#d0d0d0"/><path d="M788.5 115.5 H783 M785 113.5 L783 115.5 L785 117.5" stroke="#3b9ae1" stroke-width="1.1" fill="none" /><text x="788" y="119" font-family="Liberation Sans" font-size="9" fill="#e0e0e0">.0</text><text x="785" y="126.5" font-family="Liberation Sans" font-size="9" fill="#e0e0e0">.00</text><text x="809" y="119" font-family="Liberation Sans" font-size="9" fill="#e0e0e0">.00</text><text x="813" y="126.5" font-family="Liberation Sans" font-size="9" fill="#e0e0e0">.0</text><path d="M806 122.5 H813 M811 120.5 L813 122.5 L811 124.5" stroke="#3b9ae1" stroke-width="1.1" fill="none" /><rect x="869" y="75" width="13" height="7" fill="#d9261c" stroke="none" stroke-width="1" /><rect x="869" y="82" width="8.5" height="7.7" fill="#1f6fc5" stroke="none" stroke-width="1" /><rect x="869" y="89.7" width="14.7" height="7.3" fill="#d9261c" stroke="none" stroke-width="1" /><rect x="864.25" y="75.25" width="27.5" height="21.5" fill="none" stroke="#c8c8c8" stroke-width="1" /><path d="M869 75 V97 M882 75 V82 M883.75 89.7 V97 M887 75 V97 M864 82 H892 M864 89.7 H892" stroke="#c8c8c8" stroke-width="1" fill="none" /><rect x="940" y="82" width="18" height="15" fill="#1f6fc5" stroke="none" stroke-width="1" /><rect x="930.5" y="75.25" width="27.5" height="21.5" fill="none" stroke="#c8c8c8" stroke-width="1" /><path d="M940 75 V97 M949 75 V97 M930.5 82 H958 M930.5 89.5 H958" stroke="#c8c8c8" stroke-width="1" fill="none" /><path d="M959.5 78.5 L946 93" stroke="#2e2e2e" stroke-width="3.5" fill="none" /><path d="M959.5 78.5 L946 93" stroke="#c8c8c8" stroke-width="1.6" fill="none" /><path d="M946.5 92 C943 92,941.5 96,938 101.5 C943 101,947.5 99,948.5 95 Z" stroke="none" stroke-width="0" fill="#3b9ae1" /><path d="M1404.5 82 L1407.5 79 L1410.5 82" stroke="#6a6a6a" stroke-width="1" fill="none" /><path d="M1404.5 99 L1407.5 102 L1410.5 99" stroke="#ffffff" stroke-width="1.2" fill="none" /><path d="M1404.5 116.5 H1410.5" stroke="#ffffff" stroke-width="1" fill="none" /><path d="M1404.5 119.5 L1407.5 122.5 L1410.5 119.5" stroke="#ffffff" stroke-width="1.2" fill="none" /><path d="M1441.5 82 V75.5 H1468.5 V82 M1441.5 90 V96.5 H1468.5 V90 M1450.5 75.5 V82 M1459.5 75.5 V82 M1450.5 90 V96.5 M1459.5 90 V96.5" stroke="#d8d8d8" stroke-width="1.2" fill="none" /><rect x="1445.5" y="82.5" width="25" height="7" fill="#1463b8" stroke="#5fb3f0" stroke-width="1" /><path d="M1452.5 83 V89 M1461.5 83 V89" stroke="#5fb3f0" stroke-width="1" fill="none" /><path d="M1445.8 79.2 L1439.6 85.8 L1445.8 92.2 M1439.8 85.8 H1451.5" stroke="#5fb3f0" stroke-width="1.3" fill="none" /><path d="M1483.5 82 V75.5 H1510.5 V80 M1483.5 90 V96.5 H1510.5 V92 M1492.5 75.5 V82 M1501.5 75.5 V80 M1492.5 90 V96.5 M1501.5 92 V96.5 M1483.5 82.5 H1487.5 M1483.5 89.5 H1487.5" stroke="#d8d8d8" stroke-width="1.2" fill="none" /><path d="M1487.5 82.5 H1500 L1503.5 86 L1500 89.5 H1487.5 Z" stroke="#5fb3f0" stroke-width="1" fill="#1463b8" /><path d="M1496.5 83 V89" stroke="#5fb3f0" stroke-width="1" fill="none" /><path d="M1501 81 L1512 92 M1512 81 L1501 92" stroke="#e05050" stroke-width="1.3" fill="none" /><path d="M1531 71.5 H1547 M1531.5 70 V73 M1546.5 70 V73" stroke="#5fb3f0" stroke-width="1.1" fill="none" /><rect x="1525.5" y="75.5" width="27" height="21" fill="none" stroke="#d8d8d8" stroke-width="1.2" /><path d="M1532.5 75.5 V96.5 M1545.5 75.5 V96.5 M1525.5 82.5 H1552.5 M1525.5 89.5 H1552.5" stroke="#d8d8d8" stroke-width="1.2" fill="none" /><rect x="1533" y="83" width="12" height="6" fill="#1463b8" stroke="#5fb3f0" stroke-width="1" /><path d="M1451 127 L1454.25 130 L1457.5 127" stroke="#ffffff" stroke-width="1.2" fill="none" /><path d="M1493 127 L1496.25 130 L1499.5 127" stroke="#ffffff" stroke-width="1.2" fill="none" /><path d="M1535.6 127 L1538.8 130 L1542 127" stroke="#ffffff" stroke-width="1.2" fill="none" /><path d="M1594 71.5 H1582.5 L1588.5 78 L1582.5 84.5 H1594" stroke="#ffffff" stroke-width="1.2" fill="none" /><path d="M1659 77.2 L1662.3 80.2 L1665.6 77.2" stroke="#ffffff" stroke-width="1.2" fill="none" /><rect x="1580.5" y="94.5" width="15" height="13.5" fill="none" stroke="#d8d8d8" stroke-width="1" /><path d="M1580.5 96.5 H1595.5" stroke="#d8d8d8" stroke-width="1" fill="none" /><path d="M1588 99 V105.5 M1585.5 103 L1588 105.5 L1590.5 103" stroke="#3b9ae1" stroke-width="1.2" fill="none" /><path d="M1618 100.3 L1621.0 103.3 L1624 100.3" stroke="#ffffff" stroke-width="1.2" fill="none" /><path d="M1580.8 124 L1588 116.8 L1595 123.5 L1587.8 130.7 Z" stroke="#b146c2" stroke-width="1.3" fill="none" /><path d="M1580.8 124 L1584.4 120.4 L1591.4 127.1 L1587.8 130.7 Z" stroke="none" stroke-width="0" fill="#b146c2" /><path d="M1630 123.3 L1632.8 126.3 L1635.6 123.3" stroke="#ffffff" stroke-width="1.2" fill="none" /><path d="M1679.5 84 L1684 73.5 L1688.5 84 M1681.2 80.2 H1686.8" stroke="#3b9ae1" stroke-width="1.3" fill="none" /><path d="M1679.5 88.5 H1688 L1679.5 98.5 H1688.5" stroke="#ffffff" stroke-width="1.3" fill="none" /><path d="M1691.5 79.5 H1707 L1701.5 87 V94.5 H1697 V87 Z" stroke="#ffffff" stroke-width="1.2" fill="none" /><path d="M1704 127 L1706.5 130 L1709 127" stroke="#ffffff" stroke-width="1.2" fill="none" /><circle cx="1740.5" cy="82.5" r="10.2" fill="none" stroke="#fff" stroke-width="1"/><path d="M1733.2 89.8 L1722 100.8" stroke="#ffffff" stroke-width="1.1" fill="none" /><path d="M1750.6 127 L1753.3 130 L1756 127" stroke="#ffffff" stroke-width="1.2" fill="none" /><path d="M906 127 L909.0 130 L912 127" stroke="#ffffff" stroke-width="1.2" fill="none" /><path d="M956 127 L959.0 130 L962 127" stroke="#ffffff" stroke-width="1.2" fill="none" /><rect x="1300.5" y="119.6" width="88.5" height="1" fill="#954f72" stroke="none" stroke-width="1" /><rect x="1784.75" y="70.75" width="31" height="31" fill="none" stroke="#c8c8c8" stroke-width="1.5" /><rect x="1785.5" y="71.5" width="29.5" height="3" fill="#8a8a8a" stroke="none" stroke-width="1" /><path d="M1785 83 H1816 M1785 93.5 H1816 M1794.5 75 V101.5 M1806 75 V101.5" stroke="#9a9a9a" stroke-width="1" fill="none" /><circle cx="1799" cy="84" r="9.3" fill="#2e2e2e" stroke="#e8e8e8" stroke-width="1.3"/><path d="M1805.5 90.5 L1815.5 101" stroke="#e8e8e8" stroke-width="1.3" fill="none" /><rect x="1793.5" y="83" width="2.5" height="5" fill="#8a8a8a" stroke="none" stroke-width="1" /><rect x="1797" y="78.5" width="3" height="9.5" fill="#e0e0e0" stroke="none" stroke-width="1" /><rect x="1800.5" y="80.5" width="3" height="7.5" fill="#3b9ae1" stroke="none" stroke-width="1" /><path d="M92.5 181 H100 L96.25 185 Z" stroke="none" stroke-width="0" fill="#ffffff" /><circle cx="122.2" cy="179.8" r="1.3" fill="#fff"/><circle cx="122.2" cy="184" r="1.3" fill="#fff"/><circle cx="122.2" cy="188.2" r="1.3" fill="#fff"/><path d="M151 180.5 L160.5 188.5 M160.5 180.5 L151 188.5" stroke="#7a7a7a" stroke-width="1.3" fill="none" /><path d="M186.8 185 L190.3 188.8 L198.3 181.5" stroke="#7a7a7a" stroke-width="2.2" fill="none" /><path d="M1903.2 181.3 L1907 185.3 L1910.8 181.3" stroke="#ffffff" stroke-width="2" fill="none" /><rect x="1633.25" y="1023.25" width="12.5" height="11.5" fill="none" stroke="#ffffff" stroke-width="1.2" /><path d="M1637.5 1023 V1035 M1641.5 1023 V1035 M1633 1027 H1646 M1633 1031 H1646" stroke="#ffffff" stroke-width="1.2" fill="none" /><rect x="1673.25" y="1023.25" width="13.5" height="11.5" fill="none" stroke="#ffffff" stroke-width="1.1" /><rect x="1676.25" y="1026" width="7.5" height="6" fill="none" stroke="#ffffff" stroke-width="1" /><path d="M1677.5 1028 H1682.5 M1677.5 1030 H1682.5" stroke="#ffffff" stroke-width="0.8" fill="none" /><rect x="1713.25" y="1023.25" width="13.5" height="11.5" fill="none" stroke="#ffffff" stroke-width="1.1" /><path d="M1719 1023 V1029.5 H1713 M1722.5 1023 V1027" stroke="#ffffff" stroke-width="1.1" fill="none" /><path d="M1746 1028.8 H1754" stroke="#e6e6e6" stroke-width="1" fill="none" /><path d="M1759 1029.2 H1859" stroke="#dcdcdc" stroke-width="1" fill="none" /><rect x="1807" y="1024.2" width="5.3" height="10.6" fill="#ffffff" stroke="none" stroke-width="1" /><path d="M1864 1028.8 H1872 M1868 1024.8 V1032.8" stroke="#e6e6e6" stroke-width="1" fill="none" /><path d="M32.5 999 L27.5 1003.5 L32.5 1008 Z" fill="#8a8a8a"/><path d="M55.5 999 L60.5 1003.5 L55.5 1008 Z" fill="#8a8a8a"/></svg>
</body></html>
